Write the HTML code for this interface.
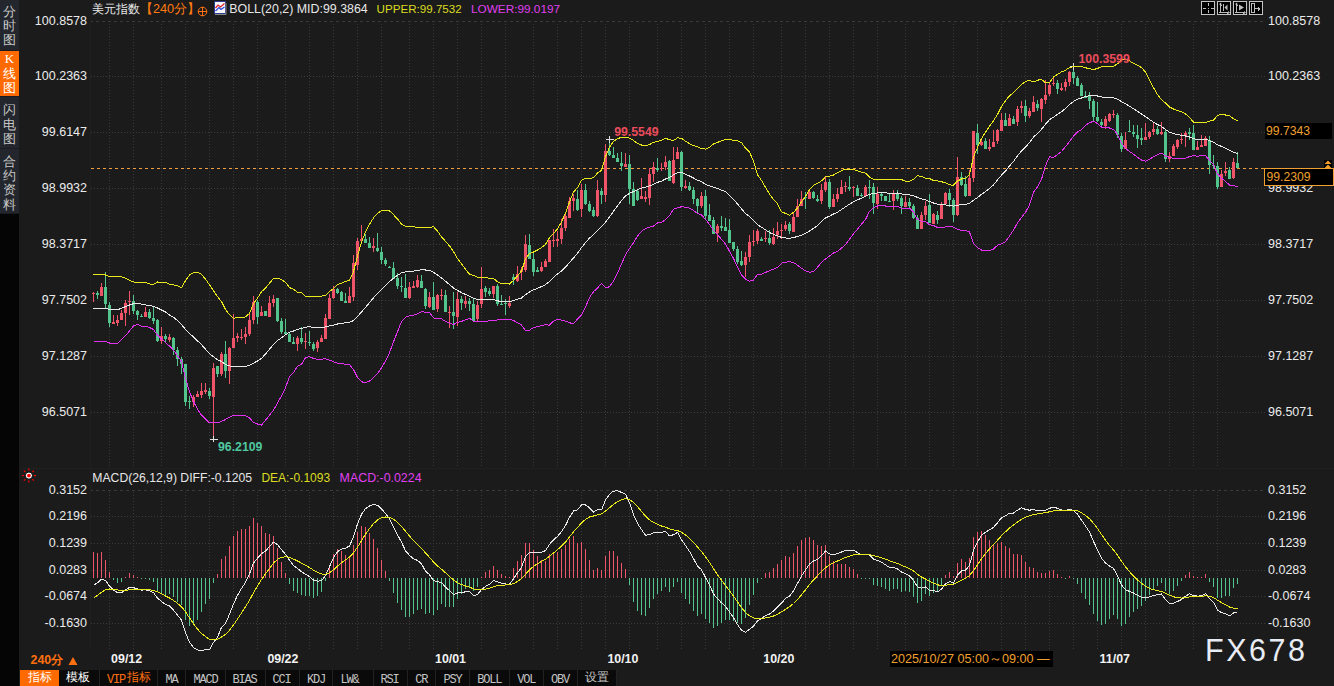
<!DOCTYPE html>
<html><head><meta charset="utf-8"><style>
*{margin:0;padding:0;box-sizing:border-box}
html,body{width:1334px;height:686px;overflow:hidden;background:#1b1b1b;font-family:"Liberation Sans",sans-serif}
.t{position:absolute;white-space:nowrap;line-height:14px}
.ax{position:absolute;font-size:12.5px;line-height:14px;color:#ebebeb;white-space:nowrap}
.ax.l{right:1247px;text-align:right}
.ax.r{left:1268px}
#side{position:absolute;left:0;top:0;width:19px;height:686px;background:#050505}
.tab{position:absolute;left:0;width:19px;background:#23262c;color:#c8c8c8;font-size:13px;line-height:14.3px;text-align:center;border-bottom:1px solid #1a1c20}
.tab.on{background:#ff6a00;color:#fff}
#tb{position:absolute;left:20px;top:670px;height:16px;display:flex}
#tb div{height:16px;line-height:16px;font-size:12px;text-align:center;background:#0a0a0a;color:#b4b4b4;border-right:1px solid #2c2c2c;font-family:"Liberation Mono",monospace;letter-spacing:-1px}
</style></head><body>
<svg width="1334" height="686" style="position:absolute;left:0;top:0"><line x1="109.5" y1="24" x2="109.5" y2="466" stroke="#3a3a3a" stroke-dasharray="1 2"/><line x1="133.5" y1="24" x2="133.5" y2="466" stroke="#3a3a3a" stroke-dasharray="1 2"/><line x1="161.5" y1="24" x2="161.5" y2="466" stroke="#3a3a3a" stroke-dasharray="1 2"/><line x1="185.5" y1="24" x2="185.5" y2="466" stroke="#3a3a3a" stroke-dasharray="1 2"/><line x1="209.5" y1="24" x2="209.5" y2="466" stroke="#3a3a3a" stroke-dasharray="1 2"/><line x1="233.5" y1="24" x2="233.5" y2="466" stroke="#3a3a3a" stroke-dasharray="1 2"/><line x1="257.5" y1="24" x2="257.5" y2="466" stroke="#3a3a3a" stroke-dasharray="1 2"/><line x1="285.5" y1="24" x2="285.5" y2="466" stroke="#3a3a3a" stroke-dasharray="1 2"/><line x1="309.5" y1="24" x2="309.5" y2="466" stroke="#3a3a3a" stroke-dasharray="1 2"/><line x1="333.5" y1="24" x2="333.5" y2="466" stroke="#3a3a3a" stroke-dasharray="1 2"/><line x1="357.5" y1="24" x2="357.5" y2="466" stroke="#3a3a3a" stroke-dasharray="1 2"/><line x1="381.5" y1="24" x2="381.5" y2="466" stroke="#3a3a3a" stroke-dasharray="1 2"/><line x1="409.5" y1="24" x2="409.5" y2="466" stroke="#3a3a3a" stroke-dasharray="1 2"/><line x1="433.5" y1="24" x2="433.5" y2="466" stroke="#3a3a3a" stroke-dasharray="1 2"/><line x1="457.5" y1="24" x2="457.5" y2="466" stroke="#3a3a3a" stroke-dasharray="1 2"/><line x1="481.5" y1="24" x2="481.5" y2="466" stroke="#3a3a3a" stroke-dasharray="1 2"/><line x1="505.5" y1="24" x2="505.5" y2="466" stroke="#3a3a3a" stroke-dasharray="1 2"/><line x1="533.5" y1="24" x2="533.5" y2="466" stroke="#3a3a3a" stroke-dasharray="1 2"/><line x1="557.5" y1="24" x2="557.5" y2="466" stroke="#3a3a3a" stroke-dasharray="1 2"/><line x1="581.5" y1="24" x2="581.5" y2="466" stroke="#3a3a3a" stroke-dasharray="1 2"/><line x1="605.5" y1="24" x2="605.5" y2="466" stroke="#3a3a3a" stroke-dasharray="1 2"/><line x1="629.5" y1="24" x2="629.5" y2="466" stroke="#3a3a3a" stroke-dasharray="1 2"/><line x1="657.5" y1="24" x2="657.5" y2="466" stroke="#3a3a3a" stroke-dasharray="1 2"/><line x1="681.5" y1="24" x2="681.5" y2="466" stroke="#3a3a3a" stroke-dasharray="1 2"/><line x1="705.5" y1="24" x2="705.5" y2="466" stroke="#3a3a3a" stroke-dasharray="1 2"/><line x1="729.5" y1="24" x2="729.5" y2="466" stroke="#3a3a3a" stroke-dasharray="1 2"/><line x1="753.5" y1="24" x2="753.5" y2="466" stroke="#3a3a3a" stroke-dasharray="1 2"/><line x1="781.5" y1="24" x2="781.5" y2="466" stroke="#3a3a3a" stroke-dasharray="1 2"/><line x1="805.5" y1="24" x2="805.5" y2="466" stroke="#3a3a3a" stroke-dasharray="1 2"/><line x1="829.5" y1="24" x2="829.5" y2="466" stroke="#3a3a3a" stroke-dasharray="1 2"/><line x1="853.5" y1="24" x2="853.5" y2="466" stroke="#3a3a3a" stroke-dasharray="1 2"/><line x1="877.5" y1="24" x2="877.5" y2="466" stroke="#3a3a3a" stroke-dasharray="1 2"/><line x1="905.5" y1="24" x2="905.5" y2="466" stroke="#3a3a3a" stroke-dasharray="1 2"/><line x1="929.5" y1="24" x2="929.5" y2="466" stroke="#3a3a3a" stroke-dasharray="1 2"/><line x1="953.5" y1="24" x2="953.5" y2="466" stroke="#3a3a3a" stroke-dasharray="1 2"/><line x1="977.5" y1="24" x2="977.5" y2="466" stroke="#3a3a3a" stroke-dasharray="1 2"/><line x1="1001.5" y1="24" x2="1001.5" y2="466" stroke="#3a3a3a" stroke-dasharray="1 2"/><line x1="1025.5" y1="24" x2="1025.5" y2="466" stroke="#3a3a3a" stroke-dasharray="1 2"/><line x1="1049.5" y1="24" x2="1049.5" y2="466" stroke="#3a3a3a" stroke-dasharray="1 2"/><line x1="1073.5" y1="24" x2="1073.5" y2="466" stroke="#3a3a3a" stroke-dasharray="1 2"/><line x1="1097.5" y1="24" x2="1097.5" y2="466" stroke="#3a3a3a" stroke-dasharray="1 2"/><line x1="1121.5" y1="24" x2="1121.5" y2="466" stroke="#3a3a3a" stroke-dasharray="1 2"/><line x1="1145.5" y1="24" x2="1145.5" y2="466" stroke="#3a3a3a" stroke-dasharray="1 2"/><line x1="1169.5" y1="24" x2="1169.5" y2="466" stroke="#3a3a3a" stroke-dasharray="1 2"/><line x1="1193.5" y1="24" x2="1193.5" y2="466" stroke="#3a3a3a" stroke-dasharray="1 2"/><line x1="1217.5" y1="24" x2="1217.5" y2="466" stroke="#3a3a3a" stroke-dasharray="1 2"/><line x1="90" y1="21.5" x2="1265" y2="21.5" stroke="#3a3a3a" stroke-dasharray="3 3"/><line x1="91" y1="76.5" x2="1265" y2="76.5" stroke="#3a3a3a" stroke-dasharray="1 2"/><line x1="91" y1="132.5" x2="1265" y2="132.5" stroke="#3a3a3a" stroke-dasharray="1 2"/><line x1="91" y1="188.5" x2="1265" y2="188.5" stroke="#3a3a3a" stroke-dasharray="1 2"/><line x1="91" y1="244.5" x2="1265" y2="244.5" stroke="#3a3a3a" stroke-dasharray="1 2"/><line x1="91" y1="300.5" x2="1265" y2="300.5" stroke="#3a3a3a" stroke-dasharray="1 2"/><line x1="91" y1="356.5" x2="1265" y2="356.5" stroke="#3a3a3a" stroke-dasharray="1 2"/><line x1="91" y1="412.5" x2="1265" y2="412.5" stroke="#3a3a3a" stroke-dasharray="1 2"/><line x1="109.5" y1="492" x2="109.5" y2="650" stroke="#3a3a3a" stroke-dasharray="1 2"/><line x1="133.5" y1="492" x2="133.5" y2="650" stroke="#3a3a3a" stroke-dasharray="1 2"/><line x1="161.5" y1="492" x2="161.5" y2="650" stroke="#3a3a3a" stroke-dasharray="1 2"/><line x1="185.5" y1="492" x2="185.5" y2="650" stroke="#3a3a3a" stroke-dasharray="1 2"/><line x1="209.5" y1="492" x2="209.5" y2="650" stroke="#3a3a3a" stroke-dasharray="1 2"/><line x1="233.5" y1="492" x2="233.5" y2="650" stroke="#3a3a3a" stroke-dasharray="1 2"/><line x1="257.5" y1="492" x2="257.5" y2="650" stroke="#3a3a3a" stroke-dasharray="1 2"/><line x1="285.5" y1="492" x2="285.5" y2="650" stroke="#3a3a3a" stroke-dasharray="1 2"/><line x1="309.5" y1="492" x2="309.5" y2="650" stroke="#3a3a3a" stroke-dasharray="1 2"/><line x1="333.5" y1="492" x2="333.5" y2="650" stroke="#3a3a3a" stroke-dasharray="1 2"/><line x1="357.5" y1="492" x2="357.5" y2="650" stroke="#3a3a3a" stroke-dasharray="1 2"/><line x1="381.5" y1="492" x2="381.5" y2="650" stroke="#3a3a3a" stroke-dasharray="1 2"/><line x1="409.5" y1="492" x2="409.5" y2="650" stroke="#3a3a3a" stroke-dasharray="1 2"/><line x1="433.5" y1="492" x2="433.5" y2="650" stroke="#3a3a3a" stroke-dasharray="1 2"/><line x1="457.5" y1="492" x2="457.5" y2="650" stroke="#3a3a3a" stroke-dasharray="1 2"/><line x1="481.5" y1="492" x2="481.5" y2="650" stroke="#3a3a3a" stroke-dasharray="1 2"/><line x1="505.5" y1="492" x2="505.5" y2="650" stroke="#3a3a3a" stroke-dasharray="1 2"/><line x1="533.5" y1="492" x2="533.5" y2="650" stroke="#3a3a3a" stroke-dasharray="1 2"/><line x1="557.5" y1="492" x2="557.5" y2="650" stroke="#3a3a3a" stroke-dasharray="1 2"/><line x1="581.5" y1="492" x2="581.5" y2="650" stroke="#3a3a3a" stroke-dasharray="1 2"/><line x1="605.5" y1="492" x2="605.5" y2="650" stroke="#3a3a3a" stroke-dasharray="1 2"/><line x1="629.5" y1="492" x2="629.5" y2="650" stroke="#3a3a3a" stroke-dasharray="1 2"/><line x1="657.5" y1="492" x2="657.5" y2="650" stroke="#3a3a3a" stroke-dasharray="1 2"/><line x1="681.5" y1="492" x2="681.5" y2="650" stroke="#3a3a3a" stroke-dasharray="1 2"/><line x1="705.5" y1="492" x2="705.5" y2="650" stroke="#3a3a3a" stroke-dasharray="1 2"/><line x1="729.5" y1="492" x2="729.5" y2="650" stroke="#3a3a3a" stroke-dasharray="1 2"/><line x1="753.5" y1="492" x2="753.5" y2="650" stroke="#3a3a3a" stroke-dasharray="1 2"/><line x1="781.5" y1="492" x2="781.5" y2="650" stroke="#3a3a3a" stroke-dasharray="1 2"/><line x1="805.5" y1="492" x2="805.5" y2="650" stroke="#3a3a3a" stroke-dasharray="1 2"/><line x1="829.5" y1="492" x2="829.5" y2="650" stroke="#3a3a3a" stroke-dasharray="1 2"/><line x1="853.5" y1="492" x2="853.5" y2="650" stroke="#3a3a3a" stroke-dasharray="1 2"/><line x1="877.5" y1="492" x2="877.5" y2="650" stroke="#3a3a3a" stroke-dasharray="1 2"/><line x1="905.5" y1="492" x2="905.5" y2="650" stroke="#3a3a3a" stroke-dasharray="1 2"/><line x1="929.5" y1="492" x2="929.5" y2="650" stroke="#3a3a3a" stroke-dasharray="1 2"/><line x1="953.5" y1="492" x2="953.5" y2="650" stroke="#3a3a3a" stroke-dasharray="1 2"/><line x1="977.5" y1="492" x2="977.5" y2="650" stroke="#3a3a3a" stroke-dasharray="1 2"/><line x1="1001.5" y1="492" x2="1001.5" y2="650" stroke="#3a3a3a" stroke-dasharray="1 2"/><line x1="1025.5" y1="492" x2="1025.5" y2="650" stroke="#3a3a3a" stroke-dasharray="1 2"/><line x1="1049.5" y1="492" x2="1049.5" y2="650" stroke="#3a3a3a" stroke-dasharray="1 2"/><line x1="1073.5" y1="492" x2="1073.5" y2="650" stroke="#3a3a3a" stroke-dasharray="1 2"/><line x1="1097.5" y1="492" x2="1097.5" y2="650" stroke="#3a3a3a" stroke-dasharray="1 2"/><line x1="1121.5" y1="492" x2="1121.5" y2="650" stroke="#3a3a3a" stroke-dasharray="1 2"/><line x1="1145.5" y1="492" x2="1145.5" y2="650" stroke="#3a3a3a" stroke-dasharray="1 2"/><line x1="1169.5" y1="492" x2="1169.5" y2="650" stroke="#3a3a3a" stroke-dasharray="1 2"/><line x1="1193.5" y1="492" x2="1193.5" y2="650" stroke="#3a3a3a" stroke-dasharray="1 2"/><line x1="1217.5" y1="492" x2="1217.5" y2="650" stroke="#3a3a3a" stroke-dasharray="1 2"/><line x1="90" y1="490.5" x2="1265" y2="490.5" stroke="#3a3a3a" stroke-dasharray="3 3"/><line x1="91" y1="516.5" x2="1265" y2="516.5" stroke="#3a3a3a" stroke-dasharray="1 2"/><line x1="91" y1="543.5" x2="1265" y2="543.5" stroke="#3a3a3a" stroke-dasharray="1 2"/><line x1="91" y1="570.5" x2="1265" y2="570.5" stroke="#3a3a3a" stroke-dasharray="1 2"/><line x1="91" y1="596.5" x2="1265" y2="596.5" stroke="#3a3a3a" stroke-dasharray="1 2"/><line x1="91" y1="623.5" x2="1265" y2="623.5" stroke="#3a3a3a" stroke-dasharray="1 2"/><line x1="90.5" y1="20" x2="90.5" y2="650" stroke="#1f1f1f"/><line x1="20" y1="468.5" x2="1334" y2="468.5" stroke="#202020"/><line x1="91" y1="168.5" x2="1264" y2="168.5" stroke="#f0a040" stroke-dasharray="3 3"/><g shape-rendering="crispEdges"><rect x="93" y="292" width="1" height="10" fill="#f05468"/><rect x="92" y="293" width="3" height="1" fill="#f05468"/><rect x="97" y="291" width="1" height="8" fill="#52c48c"/><rect x="96" y="293" width="3" height="2" fill="#52c48c"/><rect x="101" y="283" width="1" height="13" fill="#f05468"/><rect x="100" y="287" width="3" height="9" fill="#f05468"/><rect x="105" y="272" width="1" height="36" fill="#52c48c"/><rect x="104" y="287" width="3" height="17" fill="#52c48c"/><rect x="109" y="302" width="1" height="25" fill="#52c48c"/><rect x="108" y="305" width="3" height="18" fill="#52c48c"/><rect x="113" y="315" width="1" height="9" fill="#f05468"/><rect x="112" y="322" width="3" height="2" fill="#f05468"/><rect x="117" y="315" width="1" height="11" fill="#f05468"/><rect x="116" y="320" width="3" height="3" fill="#f05468"/><rect x="121" y="310" width="1" height="10" fill="#f05468"/><rect x="120" y="313" width="3" height="7" fill="#f05468"/><rect x="125" y="300" width="1" height="26" fill="#f05468"/><rect x="124" y="303" width="3" height="10" fill="#f05468"/><rect x="129" y="291" width="1" height="24" fill="#f05468"/><rect x="128" y="301" width="3" height="1" fill="#f05468"/><rect x="133" y="295" width="1" height="19" fill="#52c48c"/><rect x="132" y="301" width="3" height="10" fill="#52c48c"/><rect x="137" y="310" width="1" height="10" fill="#52c48c"/><rect x="136" y="311" width="3" height="4" fill="#52c48c"/><rect x="141" y="314" width="1" height="3" fill="#52c48c"/><rect x="140" y="316" width="3" height="1" fill="#52c48c"/><rect x="145" y="307" width="1" height="10" fill="#f05468"/><rect x="144" y="312" width="3" height="5" fill="#f05468"/><rect x="149" y="309" width="1" height="10" fill="#52c48c"/><rect x="148" y="312" width="3" height="6" fill="#52c48c"/><rect x="153" y="306" width="1" height="18" fill="#52c48c"/><rect x="152" y="318" width="3" height="3" fill="#52c48c"/><rect x="157" y="319" width="1" height="23" fill="#52c48c"/><rect x="156" y="320" width="3" height="21" fill="#52c48c"/><rect x="161" y="327" width="1" height="17" fill="#f05468"/><rect x="160" y="336" width="3" height="5" fill="#f05468"/><rect x="165" y="334" width="1" height="9" fill="#52c48c"/><rect x="164" y="336" width="3" height="3" fill="#52c48c"/><rect x="169" y="334" width="1" height="8" fill="#f05468"/><rect x="168" y="337" width="3" height="3" fill="#f05468"/><rect x="173" y="337" width="1" height="18" fill="#52c48c"/><rect x="172" y="338" width="3" height="12" fill="#52c48c"/><rect x="177" y="347" width="1" height="19" fill="#52c48c"/><rect x="176" y="350" width="3" height="9" fill="#52c48c"/><rect x="181" y="357" width="1" height="17" fill="#52c48c"/><rect x="180" y="359" width="3" height="5" fill="#52c48c"/><rect x="185" y="364" width="1" height="42" fill="#52c48c"/><rect x="184" y="364" width="3" height="38" fill="#52c48c"/><rect x="189" y="396" width="1" height="13" fill="#52c48c"/><rect x="188" y="401" width="3" height="1" fill="#52c48c"/><rect x="193" y="395" width="1" height="12" fill="#f05468"/><rect x="192" y="397" width="3" height="5" fill="#f05468"/><rect x="197" y="391" width="1" height="6" fill="#f05468"/><rect x="196" y="394" width="3" height="3" fill="#f05468"/><rect x="201" y="383" width="1" height="15" fill="#f05468"/><rect x="200" y="391" width="3" height="4" fill="#f05468"/><rect x="205" y="383" width="1" height="11" fill="#f05468"/><rect x="204" y="390" width="3" height="2" fill="#f05468"/><rect x="209" y="388" width="1" height="11" fill="#52c48c"/><rect x="208" y="391" width="3" height="5" fill="#52c48c"/><rect x="213" y="363" width="1" height="75" fill="#f05468"/><rect x="212" y="368" width="3" height="29" fill="#f05468"/><rect x="217" y="366" width="1" height="11" fill="#52c48c"/><rect x="216" y="366" width="3" height="8" fill="#52c48c"/><rect x="221" y="352" width="1" height="24" fill="#f05468"/><rect x="220" y="354" width="3" height="20" fill="#f05468"/><rect x="225" y="341" width="1" height="37" fill="#52c48c"/><rect x="224" y="354" width="3" height="17" fill="#52c48c"/><rect x="229" y="347" width="1" height="37" fill="#f05468"/><rect x="228" y="348" width="3" height="23" fill="#f05468"/><rect x="233" y="314" width="1" height="34" fill="#f05468"/><rect x="232" y="338" width="3" height="10" fill="#f05468"/><rect x="237" y="333" width="1" height="9" fill="#f05468"/><rect x="236" y="336" width="3" height="2" fill="#f05468"/><rect x="241" y="329" width="1" height="11" fill="#f05468"/><rect x="240" y="337" width="3" height="1" fill="#f05468"/><rect x="245" y="327" width="1" height="17" fill="#f05468"/><rect x="244" y="334" width="3" height="3" fill="#f05468"/><rect x="249" y="314" width="1" height="22" fill="#f05468"/><rect x="248" y="320" width="3" height="14" fill="#f05468"/><rect x="253" y="296" width="1" height="28" fill="#f05468"/><rect x="252" y="302" width="3" height="18" fill="#f05468"/><rect x="257" y="300" width="1" height="24" fill="#52c48c"/><rect x="256" y="302" width="3" height="15" fill="#52c48c"/><rect x="261" y="306" width="1" height="10" fill="#f05468"/><rect x="260" y="312" width="3" height="4" fill="#f05468"/><rect x="265" y="311" width="1" height="5" fill="#52c48c"/><rect x="264" y="311" width="3" height="5" fill="#52c48c"/><rect x="269" y="296" width="1" height="21" fill="#f05468"/><rect x="268" y="303" width="3" height="14" fill="#f05468"/><rect x="273" y="295" width="1" height="12" fill="#f05468"/><rect x="272" y="299" width="3" height="4" fill="#f05468"/><rect x="277" y="298" width="1" height="24" fill="#52c48c"/><rect x="276" y="298" width="3" height="23" fill="#52c48c"/><rect x="281" y="318" width="1" height="16" fill="#52c48c"/><rect x="280" y="321" width="3" height="11" fill="#52c48c"/><rect x="285" y="319" width="1" height="16" fill="#52c48c"/><rect x="284" y="332" width="3" height="2" fill="#52c48c"/><rect x="289" y="333" width="1" height="9" fill="#52c48c"/><rect x="288" y="334" width="3" height="8" fill="#52c48c"/><rect x="293" y="337" width="1" height="7" fill="#52c48c"/><rect x="292" y="342" width="3" height="2" fill="#52c48c"/><rect x="297" y="336" width="1" height="15" fill="#f05468"/><rect x="296" y="338" width="3" height="6" fill="#f05468"/><rect x="301" y="327" width="1" height="17" fill="#52c48c"/><rect x="300" y="338" width="3" height="4" fill="#52c48c"/><rect x="305" y="333" width="1" height="16" fill="#f05468"/><rect x="304" y="341" width="3" height="1" fill="#f05468"/><rect x="309" y="331" width="1" height="15" fill="#52c48c"/><rect x="308" y="342" width="3" height="1" fill="#52c48c"/><rect x="313" y="342" width="1" height="9" fill="#52c48c"/><rect x="312" y="344" width="3" height="5" fill="#52c48c"/><rect x="317" y="340" width="1" height="12" fill="#f05468"/><rect x="316" y="342" width="3" height="6" fill="#f05468"/><rect x="321" y="335" width="1" height="7" fill="#f05468"/><rect x="320" y="338" width="3" height="4" fill="#f05468"/><rect x="325" y="314" width="1" height="25" fill="#f05468"/><rect x="324" y="318" width="3" height="21" fill="#f05468"/><rect x="329" y="294" width="1" height="25" fill="#f05468"/><rect x="328" y="298" width="3" height="21" fill="#f05468"/><rect x="333" y="286" width="1" height="13" fill="#f05468"/><rect x="332" y="289" width="3" height="9" fill="#f05468"/><rect x="337" y="288" width="1" height="6" fill="#52c48c"/><rect x="336" y="289" width="3" height="4" fill="#52c48c"/><rect x="341" y="291" width="1" height="10" fill="#52c48c"/><rect x="340" y="292" width="3" height="9" fill="#52c48c"/><rect x="345" y="293" width="1" height="10" fill="#52c48c"/><rect x="344" y="301" width="3" height="2" fill="#52c48c"/><rect x="349" y="287" width="1" height="16" fill="#f05468"/><rect x="348" y="296" width="3" height="7" fill="#f05468"/><rect x="353" y="255" width="1" height="46" fill="#f05468"/><rect x="352" y="263" width="3" height="34" fill="#f05468"/><rect x="357" y="238" width="1" height="32" fill="#f05468"/><rect x="356" y="241" width="3" height="24" fill="#f05468"/><rect x="361" y="225" width="1" height="16" fill="#f05468"/><rect x="360" y="239" width="3" height="2" fill="#f05468"/><rect x="365" y="234" width="1" height="9" fill="#52c48c"/><rect x="364" y="239" width="3" height="4" fill="#52c48c"/><rect x="369" y="237" width="1" height="11" fill="#52c48c"/><rect x="368" y="243" width="3" height="5" fill="#52c48c"/><rect x="373" y="238" width="1" height="14" fill="#f05468"/><rect x="372" y="246" width="3" height="2" fill="#f05468"/><rect x="377" y="233" width="1" height="19" fill="#52c48c"/><rect x="376" y="248" width="3" height="3" fill="#52c48c"/><rect x="381" y="247" width="1" height="17" fill="#52c48c"/><rect x="380" y="252" width="3" height="8" fill="#52c48c"/><rect x="385" y="258" width="1" height="8" fill="#52c48c"/><rect x="384" y="260" width="3" height="4" fill="#52c48c"/><rect x="389" y="266" width="1" height="2" fill="#52c48c"/><rect x="388" y="267" width="3" height="1" fill="#52c48c"/><rect x="393" y="262" width="1" height="17" fill="#52c48c"/><rect x="392" y="268" width="3" height="11" fill="#52c48c"/><rect x="397" y="273" width="1" height="16" fill="#52c48c"/><rect x="396" y="278" width="3" height="8" fill="#52c48c"/><rect x="401" y="277" width="1" height="15" fill="#52c48c"/><rect x="400" y="286" width="3" height="1" fill="#52c48c"/><rect x="405" y="274" width="1" height="24" fill="#52c48c"/><rect x="404" y="288" width="3" height="10" fill="#52c48c"/><rect x="409" y="282" width="1" height="17" fill="#f05468"/><rect x="408" y="287" width="3" height="11" fill="#f05468"/><rect x="413" y="281" width="1" height="7" fill="#f05468"/><rect x="412" y="286" width="3" height="2" fill="#f05468"/><rect x="417" y="275" width="1" height="13" fill="#f05468"/><rect x="416" y="280" width="3" height="7" fill="#f05468"/><rect x="421" y="275" width="1" height="13" fill="#52c48c"/><rect x="420" y="281" width="3" height="7" fill="#52c48c"/><rect x="425" y="288" width="1" height="21" fill="#52c48c"/><rect x="424" y="289" width="3" height="17" fill="#52c48c"/><rect x="429" y="292" width="1" height="16" fill="#f05468"/><rect x="428" y="297" width="3" height="10" fill="#f05468"/><rect x="433" y="282" width="1" height="28" fill="#52c48c"/><rect x="432" y="297" width="3" height="13" fill="#52c48c"/><rect x="437" y="294" width="1" height="18" fill="#f05468"/><rect x="436" y="295" width="3" height="14" fill="#f05468"/><rect x="441" y="289" width="1" height="11" fill="#f05468"/><rect x="440" y="295" width="3" height="1" fill="#f05468"/><rect x="445" y="290" width="1" height="22" fill="#52c48c"/><rect x="444" y="295" width="3" height="17" fill="#52c48c"/><rect x="449" y="306" width="1" height="22" fill="#f05468"/><rect x="448" y="312" width="3" height="1" fill="#f05468"/><rect x="453" y="292" width="1" height="37" fill="#52c48c"/><rect x="452" y="312" width="3" height="4" fill="#52c48c"/><rect x="457" y="292" width="1" height="34" fill="#f05468"/><rect x="456" y="299" width="3" height="18" fill="#f05468"/><rect x="461" y="296" width="1" height="14" fill="#52c48c"/><rect x="460" y="299" width="3" height="4" fill="#52c48c"/><rect x="465" y="296" width="1" height="12" fill="#f05468"/><rect x="464" y="301" width="3" height="3" fill="#f05468"/><rect x="469" y="298" width="1" height="13" fill="#52c48c"/><rect x="468" y="301" width="3" height="3" fill="#52c48c"/><rect x="473" y="299" width="1" height="22" fill="#52c48c"/><rect x="472" y="304" width="3" height="17" fill="#52c48c"/><rect x="477" y="301" width="1" height="21" fill="#f05468"/><rect x="476" y="305" width="3" height="14" fill="#f05468"/><rect x="481" y="267" width="1" height="41" fill="#f05468"/><rect x="480" y="289" width="3" height="15" fill="#f05468"/><rect x="485" y="286" width="1" height="11" fill="#52c48c"/><rect x="484" y="288" width="3" height="4" fill="#52c48c"/><rect x="489" y="288" width="1" height="8" fill="#52c48c"/><rect x="488" y="291" width="3" height="3" fill="#52c48c"/><rect x="493" y="286" width="1" height="12" fill="#f05468"/><rect x="492" y="286" width="3" height="8" fill="#f05468"/><rect x="497" y="284" width="1" height="22" fill="#52c48c"/><rect x="496" y="286" width="3" height="18" fill="#52c48c"/><rect x="501" y="295" width="1" height="9" fill="#52c48c"/><rect x="500" y="304" width="3" height="1" fill="#52c48c"/><rect x="505" y="299" width="1" height="16" fill="#52c48c"/><rect x="504" y="303" width="3" height="1" fill="#52c48c"/><rect x="509" y="296" width="1" height="12" fill="#f05468"/><rect x="508" y="303" width="3" height="3" fill="#f05468"/><rect x="513" y="274" width="1" height="11" fill="#52c48c"/><rect x="512" y="277" width="3" height="3" fill="#52c48c"/><rect x="517" y="266" width="1" height="16" fill="#f05468"/><rect x="516" y="274" width="3" height="7" fill="#f05468"/><rect x="521" y="267" width="1" height="13" fill="#f05468"/><rect x="520" y="270" width="3" height="2" fill="#f05468"/><rect x="525" y="235" width="1" height="37" fill="#f05468"/><rect x="524" y="244" width="3" height="26" fill="#f05468"/><rect x="529" y="234" width="1" height="25" fill="#52c48c"/><rect x="528" y="245" width="3" height="14" fill="#52c48c"/><rect x="533" y="253" width="1" height="23" fill="#52c48c"/><rect x="532" y="259" width="3" height="13" fill="#52c48c"/><rect x="537" y="267" width="1" height="5" fill="#52c48c"/><rect x="536" y="270" width="3" height="2" fill="#52c48c"/><rect x="541" y="262" width="1" height="10" fill="#f05468"/><rect x="540" y="267" width="3" height="4" fill="#f05468"/><rect x="545" y="259" width="1" height="8" fill="#f05468"/><rect x="544" y="261" width="3" height="6" fill="#f05468"/><rect x="549" y="240" width="1" height="22" fill="#f05468"/><rect x="548" y="240" width="3" height="22" fill="#f05468"/><rect x="553" y="229" width="1" height="18" fill="#f05468"/><rect x="552" y="240" width="3" height="1" fill="#f05468"/><rect x="557" y="231" width="1" height="16" fill="#f05468"/><rect x="556" y="239" width="3" height="2" fill="#f05468"/><rect x="561" y="219" width="1" height="25" fill="#f05468"/><rect x="560" y="228" width="3" height="11" fill="#f05468"/><rect x="565" y="212" width="1" height="19" fill="#f05468"/><rect x="564" y="216" width="3" height="12" fill="#f05468"/><rect x="569" y="197" width="1" height="21" fill="#f05468"/><rect x="568" y="201" width="3" height="17" fill="#f05468"/><rect x="573" y="194" width="1" height="17" fill="#f05468"/><rect x="572" y="198" width="3" height="3" fill="#f05468"/><rect x="577" y="190" width="1" height="21" fill="#52c48c"/><rect x="576" y="199" width="3" height="11" fill="#52c48c"/><rect x="581" y="184" width="1" height="33" fill="#f05468"/><rect x="580" y="190" width="3" height="19" fill="#f05468"/><rect x="585" y="184" width="1" height="21" fill="#52c48c"/><rect x="584" y="190" width="3" height="14" fill="#52c48c"/><rect x="589" y="201" width="1" height="11" fill="#52c48c"/><rect x="588" y="204" width="3" height="7" fill="#52c48c"/><rect x="593" y="207" width="1" height="10" fill="#52c48c"/><rect x="592" y="210" width="3" height="6" fill="#52c48c"/><rect x="597" y="180" width="1" height="37" fill="#f05468"/><rect x="596" y="190" width="3" height="26" fill="#f05468"/><rect x="601" y="188" width="1" height="16" fill="#52c48c"/><rect x="600" y="191" width="3" height="4" fill="#52c48c"/><rect x="605" y="144" width="1" height="58" fill="#f05468"/><rect x="604" y="151" width="3" height="44" fill="#f05468"/><rect x="609" y="139" width="1" height="17" fill="#52c48c"/><rect x="608" y="151" width="3" height="4" fill="#52c48c"/><rect x="613" y="147" width="1" height="11" fill="#52c48c"/><rect x="612" y="155" width="3" height="3" fill="#52c48c"/><rect x="617" y="153" width="1" height="9" fill="#52c48c"/><rect x="616" y="158" width="3" height="4" fill="#52c48c"/><rect x="621" y="152" width="1" height="19" fill="#52c48c"/><rect x="620" y="163" width="3" height="3" fill="#52c48c"/><rect x="625" y="153" width="1" height="14" fill="#f05468"/><rect x="624" y="164" width="3" height="3" fill="#f05468"/><rect x="629" y="155" width="1" height="49" fill="#52c48c"/><rect x="628" y="164" width="3" height="25" fill="#52c48c"/><rect x="633" y="182" width="1" height="24" fill="#52c48c"/><rect x="632" y="189" width="3" height="17" fill="#52c48c"/><rect x="637" y="189" width="1" height="12" fill="#52c48c"/><rect x="636" y="191" width="3" height="9" fill="#52c48c"/><rect x="641" y="178" width="1" height="21" fill="#f05468"/><rect x="640" y="196" width="3" height="3" fill="#f05468"/><rect x="645" y="191" width="1" height="11" fill="#f05468"/><rect x="644" y="197" width="3" height="2" fill="#f05468"/><rect x="649" y="168" width="1" height="37" fill="#f05468"/><rect x="648" y="174" width="3" height="24" fill="#f05468"/><rect x="653" y="162" width="1" height="20" fill="#f05468"/><rect x="652" y="167" width="3" height="7" fill="#f05468"/><rect x="657" y="158" width="1" height="14" fill="#52c48c"/><rect x="656" y="168" width="3" height="2" fill="#52c48c"/><rect x="661" y="163" width="1" height="8" fill="#f05468"/><rect x="660" y="168" width="3" height="1" fill="#f05468"/><rect x="665" y="156" width="1" height="14" fill="#f05468"/><rect x="664" y="162" width="3" height="5" fill="#f05468"/><rect x="669" y="160" width="1" height="21" fill="#52c48c"/><rect x="668" y="161" width="3" height="20" fill="#52c48c"/><rect x="673" y="147" width="1" height="37" fill="#f05468"/><rect x="672" y="160" width="3" height="23" fill="#f05468"/><rect x="677" y="147" width="1" height="12" fill="#f05468"/><rect x="676" y="152" width="3" height="7" fill="#f05468"/><rect x="681" y="151" width="1" height="40" fill="#52c48c"/><rect x="680" y="152" width="3" height="35" fill="#52c48c"/><rect x="685" y="180" width="1" height="9" fill="#f05468"/><rect x="684" y="186" width="3" height="2" fill="#f05468"/><rect x="689" y="182" width="1" height="9" fill="#52c48c"/><rect x="688" y="186" width="3" height="4" fill="#52c48c"/><rect x="693" y="187" width="1" height="17" fill="#52c48c"/><rect x="692" y="190" width="3" height="9" fill="#52c48c"/><rect x="697" y="198" width="1" height="16" fill="#52c48c"/><rect x="696" y="199" width="3" height="7" fill="#52c48c"/><rect x="701" y="192" width="1" height="16" fill="#f05468"/><rect x="700" y="196" width="3" height="10" fill="#f05468"/><rect x="705" y="190" width="1" height="29" fill="#52c48c"/><rect x="704" y="196" width="3" height="20" fill="#52c48c"/><rect x="709" y="204" width="1" height="17" fill="#52c48c"/><rect x="708" y="215" width="3" height="6" fill="#52c48c"/><rect x="713" y="217" width="1" height="17" fill="#52c48c"/><rect x="712" y="220" width="3" height="14" fill="#52c48c"/><rect x="717" y="224" width="1" height="18" fill="#f05468"/><rect x="716" y="226" width="3" height="7" fill="#f05468"/><rect x="721" y="216" width="1" height="15" fill="#52c48c"/><rect x="720" y="226" width="3" height="2" fill="#52c48c"/><rect x="725" y="218" width="1" height="13" fill="#52c48c"/><rect x="724" y="227" width="3" height="4" fill="#52c48c"/><rect x="729" y="219" width="1" height="24" fill="#52c48c"/><rect x="728" y="230" width="3" height="13" fill="#52c48c"/><rect x="733" y="242" width="1" height="9" fill="#52c48c"/><rect x="732" y="242" width="3" height="7" fill="#52c48c"/><rect x="737" y="246" width="1" height="18" fill="#52c48c"/><rect x="736" y="249" width="3" height="13" fill="#52c48c"/><rect x="741" y="251" width="1" height="15" fill="#52c48c"/><rect x="740" y="261" width="3" height="4" fill="#52c48c"/><rect x="745" y="252" width="1" height="25" fill="#f05468"/><rect x="744" y="257" width="3" height="8" fill="#f05468"/><rect x="749" y="235" width="1" height="27" fill="#f05468"/><rect x="748" y="242" width="3" height="15" fill="#f05468"/><rect x="753" y="230" width="1" height="16" fill="#f05468"/><rect x="752" y="241" width="3" height="1" fill="#f05468"/><rect x="757" y="229" width="1" height="15" fill="#f05468"/><rect x="756" y="231" width="3" height="10" fill="#f05468"/><rect x="761" y="237" width="1" height="4" fill="#52c48c"/><rect x="760" y="239" width="3" height="2" fill="#52c48c"/><rect x="765" y="231" width="1" height="11" fill="#f05468"/><rect x="764" y="238" width="3" height="1" fill="#f05468"/><rect x="769" y="230" width="1" height="15" fill="#52c48c"/><rect x="768" y="238" width="3" height="5" fill="#52c48c"/><rect x="773" y="228" width="1" height="17" fill="#f05468"/><rect x="772" y="237" width="3" height="7" fill="#f05468"/><rect x="777" y="222" width="1" height="17" fill="#f05468"/><rect x="776" y="231" width="3" height="4" fill="#f05468"/><rect x="781" y="224" width="1" height="15" fill="#f05468"/><rect x="780" y="230" width="3" height="1" fill="#f05468"/><rect x="785" y="221" width="1" height="10" fill="#f05468"/><rect x="784" y="225" width="3" height="4" fill="#f05468"/><rect x="789" y="222" width="1" height="12" fill="#52c48c"/><rect x="788" y="224" width="3" height="7" fill="#52c48c"/><rect x="793" y="213" width="1" height="19" fill="#f05468"/><rect x="792" y="217" width="3" height="15" fill="#f05468"/><rect x="797" y="199" width="1" height="18" fill="#f05468"/><rect x="796" y="206" width="3" height="11" fill="#f05468"/><rect x="801" y="191" width="1" height="15" fill="#f05468"/><rect x="800" y="199" width="3" height="7" fill="#f05468"/><rect x="805" y="192" width="1" height="17" fill="#52c48c"/><rect x="804" y="197" width="3" height="1" fill="#52c48c"/><rect x="809" y="191" width="1" height="8" fill="#f05468"/><rect x="808" y="192" width="3" height="7" fill="#f05468"/><rect x="813" y="191" width="1" height="8" fill="#52c48c"/><rect x="812" y="192" width="3" height="6" fill="#52c48c"/><rect x="817" y="195" width="1" height="7" fill="#52c48c"/><rect x="816" y="199" width="3" height="2" fill="#52c48c"/><rect x="821" y="184" width="1" height="20" fill="#f05468"/><rect x="820" y="190" width="3" height="11" fill="#f05468"/><rect x="825" y="176" width="1" height="16" fill="#f05468"/><rect x="824" y="182" width="3" height="8" fill="#f05468"/><rect x="829" y="179" width="1" height="30" fill="#52c48c"/><rect x="828" y="182" width="3" height="25" fill="#52c48c"/><rect x="833" y="194" width="1" height="13" fill="#f05468"/><rect x="832" y="199" width="3" height="8" fill="#f05468"/><rect x="837" y="188" width="1" height="14" fill="#f05468"/><rect x="836" y="194" width="3" height="5" fill="#f05468"/><rect x="841" y="180" width="1" height="14" fill="#f05468"/><rect x="840" y="187" width="3" height="7" fill="#f05468"/><rect x="845" y="182" width="1" height="10" fill="#f05468"/><rect x="844" y="186" width="3" height="1" fill="#f05468"/><rect x="849" y="176" width="1" height="15" fill="#52c48c"/><rect x="848" y="187" width="3" height="2" fill="#52c48c"/><rect x="853" y="186" width="1" height="11" fill="#f05468"/><rect x="852" y="187" width="3" height="1" fill="#f05468"/><rect x="857" y="185" width="1" height="11" fill="#52c48c"/><rect x="856" y="188" width="3" height="8" fill="#52c48c"/><rect x="861" y="193" width="1" height="4" fill="#52c48c"/><rect x="860" y="195" width="3" height="1" fill="#52c48c"/><rect x="865" y="185" width="1" height="11" fill="#f05468"/><rect x="864" y="187" width="3" height="9" fill="#f05468"/><rect x="869" y="180" width="1" height="19" fill="#52c48c"/><rect x="868" y="187" width="3" height="1" fill="#52c48c"/><rect x="873" y="183" width="1" height="31" fill="#52c48c"/><rect x="872" y="187" width="3" height="16" fill="#52c48c"/><rect x="877" y="187" width="1" height="22" fill="#f05468"/><rect x="876" y="194" width="3" height="10" fill="#f05468"/><rect x="881" y="192" width="1" height="9" fill="#52c48c"/><rect x="880" y="194" width="3" height="2" fill="#52c48c"/><rect x="885" y="196" width="1" height="5" fill="#52c48c"/><rect x="884" y="196" width="3" height="5" fill="#52c48c"/><rect x="889" y="194" width="1" height="8" fill="#52c48c"/><rect x="888" y="201" width="3" height="1" fill="#52c48c"/><rect x="893" y="190" width="1" height="20" fill="#f05468"/><rect x="892" y="194" width="3" height="7" fill="#f05468"/><rect x="897" y="190" width="1" height="11" fill="#52c48c"/><rect x="896" y="194" width="3" height="5" fill="#52c48c"/><rect x="901" y="196" width="1" height="18" fill="#52c48c"/><rect x="900" y="198" width="3" height="8" fill="#52c48c"/><rect x="905" y="196" width="1" height="11" fill="#f05468"/><rect x="904" y="202" width="3" height="5" fill="#f05468"/><rect x="909" y="198" width="1" height="11" fill="#52c48c"/><rect x="908" y="202" width="3" height="4" fill="#52c48c"/><rect x="913" y="204" width="1" height="15" fill="#52c48c"/><rect x="912" y="206" width="3" height="12" fill="#52c48c"/><rect x="917" y="215" width="1" height="14" fill="#52c48c"/><rect x="916" y="218" width="3" height="11" fill="#52c48c"/><rect x="921" y="212" width="1" height="17" fill="#f05468"/><rect x="920" y="215" width="3" height="14" fill="#f05468"/><rect x="925" y="201" width="1" height="19" fill="#f05468"/><rect x="924" y="206" width="3" height="9" fill="#f05468"/><rect x="929" y="194" width="1" height="29" fill="#52c48c"/><rect x="928" y="205" width="3" height="18" fill="#52c48c"/><rect x="933" y="213" width="1" height="11" fill="#f05468"/><rect x="932" y="214" width="3" height="10" fill="#f05468"/><rect x="937" y="211" width="1" height="13" fill="#52c48c"/><rect x="936" y="215" width="3" height="5" fill="#52c48c"/><rect x="941" y="202" width="1" height="17" fill="#f05468"/><rect x="940" y="205" width="3" height="14" fill="#f05468"/><rect x="945" y="192" width="1" height="13" fill="#f05468"/><rect x="944" y="193" width="3" height="11" fill="#f05468"/><rect x="949" y="189" width="1" height="18" fill="#52c48c"/><rect x="948" y="193" width="3" height="7" fill="#52c48c"/><rect x="953" y="198" width="1" height="24" fill="#52c48c"/><rect x="952" y="200" width="3" height="15" fill="#52c48c"/><rect x="957" y="157" width="1" height="59" fill="#f05468"/><rect x="956" y="177" width="3" height="38" fill="#f05468"/><rect x="961" y="172" width="1" height="14" fill="#52c48c"/><rect x="960" y="177" width="3" height="8" fill="#52c48c"/><rect x="965" y="176" width="1" height="21" fill="#52c48c"/><rect x="964" y="184" width="3" height="12" fill="#52c48c"/><rect x="969" y="170" width="1" height="26" fill="#f05468"/><rect x="968" y="178" width="3" height="18" fill="#f05468"/><rect x="973" y="131" width="1" height="51" fill="#f05468"/><rect x="972" y="131" width="3" height="47" fill="#f05468"/><rect x="977" y="124" width="1" height="30" fill="#52c48c"/><rect x="976" y="133" width="3" height="12" fill="#52c48c"/><rect x="981" y="140" width="1" height="6" fill="#f05468"/><rect x="980" y="142" width="3" height="3" fill="#f05468"/><rect x="985" y="138" width="1" height="11" fill="#52c48c"/><rect x="984" y="141" width="3" height="8" fill="#52c48c"/><rect x="989" y="139" width="1" height="12" fill="#f05468"/><rect x="988" y="147" width="3" height="2" fill="#f05468"/><rect x="993" y="130" width="1" height="17" fill="#f05468"/><rect x="992" y="142" width="3" height="5" fill="#f05468"/><rect x="997" y="129" width="1" height="15" fill="#f05468"/><rect x="996" y="130" width="3" height="11" fill="#f05468"/><rect x="1001" y="113" width="1" height="18" fill="#f05468"/><rect x="1000" y="120" width="3" height="11" fill="#f05468"/><rect x="1005" y="113" width="1" height="13" fill="#52c48c"/><rect x="1004" y="120" width="3" height="6" fill="#52c48c"/><rect x="1009" y="114" width="1" height="12" fill="#f05468"/><rect x="1008" y="118" width="3" height="8" fill="#f05468"/><rect x="1013" y="116" width="1" height="8" fill="#52c48c"/><rect x="1012" y="119" width="3" height="5" fill="#52c48c"/><rect x="1017" y="106" width="1" height="20" fill="#f05468"/><rect x="1016" y="109" width="3" height="13" fill="#f05468"/><rect x="1021" y="101" width="1" height="12" fill="#f05468"/><rect x="1020" y="106" width="3" height="2" fill="#f05468"/><rect x="1025" y="100" width="1" height="22" fill="#52c48c"/><rect x="1024" y="106" width="3" height="10" fill="#52c48c"/><rect x="1029" y="108" width="1" height="10" fill="#f05468"/><rect x="1028" y="111" width="3" height="5" fill="#f05468"/><rect x="1033" y="96" width="1" height="16" fill="#f05468"/><rect x="1032" y="102" width="3" height="10" fill="#f05468"/><rect x="1037" y="100" width="1" height="11" fill="#52c48c"/><rect x="1036" y="104" width="3" height="4" fill="#52c48c"/><rect x="1041" y="98" width="1" height="24" fill="#f05468"/><rect x="1040" y="99" width="3" height="10" fill="#f05468"/><rect x="1045" y="80" width="1" height="24" fill="#f05468"/><rect x="1044" y="95" width="3" height="5" fill="#f05468"/><rect x="1049" y="82" width="1" height="14" fill="#f05468"/><rect x="1048" y="85" width="3" height="9" fill="#f05468"/><rect x="1053" y="78" width="1" height="8" fill="#f05468"/><rect x="1052" y="83" width="3" height="1" fill="#f05468"/><rect x="1057" y="80" width="1" height="14" fill="#52c48c"/><rect x="1056" y="83" width="3" height="6" fill="#52c48c"/><rect x="1061" y="83" width="1" height="8" fill="#f05468"/><rect x="1060" y="88" width="3" height="2" fill="#f05468"/><rect x="1065" y="79" width="1" height="12" fill="#f05468"/><rect x="1064" y="82" width="3" height="5" fill="#f05468"/><rect x="1069" y="71" width="1" height="15" fill="#f05468"/><rect x="1068" y="72" width="3" height="10" fill="#f05468"/><rect x="1073" y="65" width="1" height="19" fill="#52c48c"/><rect x="1072" y="72" width="3" height="6" fill="#52c48c"/><rect x="1077" y="76" width="1" height="10" fill="#52c48c"/><rect x="1076" y="78" width="3" height="8" fill="#52c48c"/><rect x="1081" y="83" width="1" height="13" fill="#52c48c"/><rect x="1080" y="85" width="3" height="11" fill="#52c48c"/><rect x="1085" y="91" width="1" height="7" fill="#52c48c"/><rect x="1084" y="96" width="3" height="2" fill="#52c48c"/><rect x="1089" y="92" width="1" height="17" fill="#52c48c"/><rect x="1088" y="96" width="3" height="5" fill="#52c48c"/><rect x="1093" y="99" width="1" height="22" fill="#52c48c"/><rect x="1092" y="101" width="3" height="16" fill="#52c48c"/><rect x="1097" y="102" width="1" height="20" fill="#52c48c"/><rect x="1096" y="117" width="3" height="4" fill="#52c48c"/><rect x="1101" y="119" width="1" height="7" fill="#52c48c"/><rect x="1100" y="122" width="3" height="3" fill="#52c48c"/><rect x="1105" y="116" width="1" height="13" fill="#f05468"/><rect x="1104" y="119" width="3" height="7" fill="#f05468"/><rect x="1109" y="113" width="1" height="9" fill="#f05468"/><rect x="1108" y="114" width="3" height="7" fill="#f05468"/><rect x="1113" y="110" width="1" height="8" fill="#f05468"/><rect x="1112" y="114" width="3" height="1" fill="#f05468"/><rect x="1117" y="113" width="1" height="25" fill="#52c48c"/><rect x="1116" y="115" width="3" height="20" fill="#52c48c"/><rect x="1121" y="133" width="1" height="19" fill="#52c48c"/><rect x="1120" y="136" width="3" height="13" fill="#52c48c"/><rect x="1125" y="132" width="1" height="17" fill="#f05468"/><rect x="1124" y="140" width="3" height="9" fill="#f05468"/><rect x="1129" y="120" width="1" height="12" fill="#52c48c"/><rect x="1128" y="131" width="3" height="1" fill="#52c48c"/><rect x="1133" y="125" width="1" height="12" fill="#52c48c"/><rect x="1132" y="132" width="3" height="2" fill="#52c48c"/><rect x="1137" y="125" width="1" height="23" fill="#52c48c"/><rect x="1136" y="135" width="3" height="4" fill="#52c48c"/><rect x="1141" y="128" width="1" height="17" fill="#52c48c"/><rect x="1140" y="138" width="3" height="2" fill="#52c48c"/><rect x="1145" y="123" width="1" height="17" fill="#f05468"/><rect x="1144" y="137" width="3" height="3" fill="#f05468"/><rect x="1149" y="131" width="1" height="8" fill="#f05468"/><rect x="1148" y="132" width="3" height="5" fill="#f05468"/><rect x="1153" y="122" width="1" height="13" fill="#f05468"/><rect x="1152" y="129" width="3" height="3" fill="#f05468"/><rect x="1157" y="126" width="1" height="9" fill="#52c48c"/><rect x="1156" y="129" width="3" height="5" fill="#52c48c"/><rect x="1161" y="122" width="1" height="13" fill="#f05468"/><rect x="1160" y="132" width="3" height="2" fill="#f05468"/><rect x="1165" y="130" width="1" height="32" fill="#52c48c"/><rect x="1164" y="132" width="3" height="27" fill="#52c48c"/><rect x="1169" y="152" width="1" height="10" fill="#f05468"/><rect x="1168" y="156" width="3" height="3" fill="#f05468"/><rect x="1173" y="144" width="1" height="12" fill="#f05468"/><rect x="1172" y="146" width="3" height="10" fill="#f05468"/><rect x="1177" y="139" width="1" height="10" fill="#f05468"/><rect x="1176" y="140" width="3" height="7" fill="#f05468"/><rect x="1181" y="133" width="1" height="11" fill="#f05468"/><rect x="1180" y="139" width="3" height="1" fill="#f05468"/><rect x="1185" y="131" width="1" height="16" fill="#f05468"/><rect x="1184" y="133" width="3" height="3" fill="#f05468"/><rect x="1189" y="128" width="1" height="12" fill="#52c48c"/><rect x="1188" y="132" width="3" height="2" fill="#52c48c"/><rect x="1193" y="125" width="1" height="25" fill="#52c48c"/><rect x="1192" y="133" width="3" height="17" fill="#52c48c"/><rect x="1197" y="141" width="1" height="9" fill="#f05468"/><rect x="1196" y="147" width="3" height="3" fill="#f05468"/><rect x="1201" y="135" width="1" height="12" fill="#f05468"/><rect x="1200" y="145" width="3" height="2" fill="#f05468"/><rect x="1205" y="136" width="1" height="10" fill="#f05468"/><rect x="1204" y="138" width="3" height="8" fill="#f05468"/><rect x="1209" y="136" width="1" height="38" fill="#52c48c"/><rect x="1208" y="140" width="3" height="25" fill="#52c48c"/><rect x="1213" y="155" width="1" height="14" fill="#52c48c"/><rect x="1212" y="165" width="3" height="1" fill="#52c48c"/><rect x="1217" y="162" width="1" height="27" fill="#52c48c"/><rect x="1216" y="166" width="3" height="21" fill="#52c48c"/><rect x="1221" y="170" width="1" height="17" fill="#f05468"/><rect x="1220" y="174" width="3" height="13" fill="#f05468"/><rect x="1225" y="162" width="1" height="14" fill="#f05468"/><rect x="1224" y="171" width="3" height="2" fill="#f05468"/><rect x="1229" y="167" width="1" height="12" fill="#52c48c"/><rect x="1228" y="170" width="3" height="9" fill="#52c48c"/><rect x="1233" y="158" width="1" height="21" fill="#f05468"/><rect x="1232" y="162" width="3" height="16" fill="#f05468"/><rect x="1237" y="152" width="1" height="16" fill="#52c48c"/><rect x="1236" y="163" width="3" height="5" fill="#52c48c"/></g><path d="M606 139.5h8M609.5 136v7M1070 66.5h8M1073.5 63v7M210 439.5h8M213.5 436v6" stroke="#e0e0e0" stroke-width="1" shape-rendering="crispEdges"/><polyline points="93.5,275.0 97.5,274.5 101.5,274.4 105.5,275.0 109.5,276.4 113.5,276.5 117.5,276.6 121.5,276.7 125.5,278.1 129.5,280.2 133.5,282.0 137.5,282.2 141.5,282.4 145.5,282.5 149.5,284.0 153.5,284.3 157.5,282.0 161.5,282.1 165.5,282.2 169.5,284.2 173.5,285.0 177.5,285.5 181.5,287.9 185.5,280.5 189.5,275.0 193.5,272.7 197.5,272.4 201.5,274.4 205.5,279.1 209.5,284.9 213.5,290.8 217.5,296.5 221.5,301.6 225.5,309.5 229.5,314.8 233.5,318.2 237.5,317.5 241.5,317.6 245.5,316.9 249.5,313.3 253.5,303.8 257.5,298.1 261.5,291.7 265.5,288.0 269.5,283.2 273.5,278.4 277.5,278.2 281.5,279.7 285.5,282.2 289.5,287.6 293.5,289.2 297.5,292.2 301.5,292.8 305.5,296.6 309.5,297.0 313.5,296.3 317.5,296.2 321.5,296.2 325.5,295.2 329.5,291.5 333.5,288.6 337.5,284.7 341.5,283.1 345.5,281.4 349.5,280.2 353.5,271.6 357.5,255.7 361.5,242.2 365.5,231.9 369.5,224.3 373.5,217.9 377.5,213.1 381.5,210.9 385.5,210.1 389.5,210.8 393.5,214.7 397.5,219.0 401.5,224.2 405.5,226.4 409.5,226.8 413.5,226.9 417.5,227.2 421.5,228.0 425.5,227.7 429.5,227.6 433.5,226.7 437.5,231.1 441.5,236.8 445.5,241.3 449.5,245.9 453.5,251.5 457.5,258.5 461.5,263.8 465.5,269.1 469.5,274.3 473.5,275.5 477.5,277.3 481.5,277.7 485.5,277.2 489.5,278.3 493.5,278.4 497.5,281.8 501.5,283.6 505.5,283.6 509.5,284.1 513.5,280.3 517.5,275.8 521.5,271.1 525.5,258.9 529.5,253.6 533.5,252.0 537.5,250.0 541.5,247.6 545.5,244.5 549.5,237.6 553.5,233.6 557.5,228.8 561.5,221.8 565.5,213.1 569.5,202.2 573.5,192.1 577.5,187.6 581.5,180.4 585.5,178.1 589.5,178.4 593.5,177.8 597.5,173.1 601.5,170.2 605.5,156.8 609.5,147.2 613.5,141.5 617.5,138.5 621.5,137.5 625.5,137.2 629.5,138.2 633.5,140.5 637.5,143.3 641.5,145.0 645.5,145.8 649.5,144.5 653.5,142.4 657.5,141.6 661.5,140.1 665.5,138.4 669.5,139.6 673.5,140.5 677.5,137.8 681.5,138.3 685.5,141.2 689.5,143.7 693.5,145.7 697.5,146.8 701.5,148.5 705.5,149.1 709.5,147.3 713.5,144.0 717.5,142.4 721.5,140.9 725.5,139.5 729.5,139.2 733.5,140.3 737.5,140.7 741.5,142.6 745.5,148.2 749.5,152.0 753.5,161.3 757.5,174.7 761.5,180.4 765.5,187.2 769.5,194.2 773.5,199.7 777.5,203.7 781.5,211.6 785.5,213.5 789.5,215.2 793.5,212.4 797.5,208.0 801.5,201.9 805.5,196.3 809.5,189.7 813.5,185.4 817.5,183.4 821.5,180.9 825.5,176.8 829.5,176.3 833.5,175.0 837.5,172.9 841.5,170.8 845.5,169.1 849.5,169.4 853.5,169.5 857.5,170.6 861.5,172.4 865.5,173.1 869.5,177.1 873.5,179.3 877.5,179.8 881.5,179.8 885.5,179.7 889.5,179.6 893.5,179.6 897.5,179.6 901.5,179.5 905.5,181.4 909.5,181.5 913.5,179.2 917.5,175.6 921.5,176.5 925.5,178.2 929.5,178.5 933.5,180.5 937.5,180.9 941.5,181.7 945.5,182.9 949.5,184.9 953.5,185.2 957.5,181.0 961.5,179.0 965.5,178.6 969.5,174.6 973.5,156.9 977.5,147.5 981.5,138.5 985.5,132.3 989.5,126.4 993.5,120.7 997.5,114.5 1001.5,106.6 1005.5,100.7 1009.5,95.9 1013.5,92.6 1017.5,88.8 1021.5,84.3 1025.5,81.7 1029.5,80.2 1033.5,81.9 1037.5,80.2 1041.5,79.4 1045.5,82.8 1049.5,82.5 1053.5,77.0 1057.5,74.3 1061.5,71.9 1065.5,70.2 1069.5,67.6 1073.5,66.7 1077.5,66.4 1081.5,66.5 1085.5,67.8 1089.5,68.6 1093.5,69.6 1097.5,68.4 1101.5,66.8 1105.5,66.6 1109.5,66.4 1113.5,66.2 1117.5,63.8 1121.5,60.0 1125.5,59.1 1129.5,60.9 1133.5,63.4 1137.5,65.2 1141.5,67.6 1145.5,72.0 1149.5,79.9 1153.5,87.6 1157.5,94.6 1161.5,99.7 1165.5,103.0 1169.5,107.0 1173.5,109.0 1177.5,110.6 1181.5,111.8 1185.5,113.9 1189.5,117.4 1193.5,122.1 1197.5,122.5 1201.5,122.7 1205.5,122.6 1209.5,121.1 1213.5,120.2 1217.5,115.4 1221.5,114.6 1225.5,115.0 1229.5,115.8 1233.5,118.7 1237.5,120.9" fill="none" stroke="#e8e81c" stroke-width="1" shape-rendering="crispEdges"/><polyline points="93.5,308.3 97.5,308.4 101.5,308.6 105.5,308.8 109.5,309.1 113.5,309.7 117.5,309.8 121.5,308.2 125.5,306.6 129.5,305.0 133.5,303.7 137.5,303.4 141.5,304.1 145.5,304.9 149.5,305.6 153.5,306.3 157.5,308.0 161.5,310.0 165.5,312.0 169.5,315.0 173.5,317.2 177.5,320.7 181.5,324.7 185.5,329.3 189.5,333.3 193.5,337.1 197.5,340.8 201.5,344.7 205.5,349.1 209.5,353.8 213.5,356.7 217.5,359.6 221.5,361.5 225.5,364.5 229.5,366.0 233.5,366.8 237.5,366.6 241.5,366.6 245.5,366.4 249.5,365.5 253.5,363.1 257.5,361.0 261.5,358.4 265.5,354.1 269.5,349.2 273.5,344.3 277.5,340.6 281.5,337.7 285.5,334.9 289.5,332.2 293.5,331.0 297.5,329.2 301.5,328.6 305.5,327.1 309.5,326.8 313.5,327.4 317.5,327.7 321.5,327.8 325.5,326.9 329.5,325.8 333.5,325.2 337.5,324.0 341.5,323.4 345.5,322.8 349.5,322.4 353.5,320.6 357.5,316.6 361.5,311.9 365.5,307.4 369.5,302.6 373.5,297.8 377.5,293.4 381.5,289.3 385.5,285.5 389.5,281.7 393.5,278.2 397.5,275.4 401.5,272.9 405.5,271.8 409.5,271.3 413.5,271.1 417.5,270.4 421.5,269.8 425.5,270.0 429.5,270.0 433.5,272.3 437.5,275.1 441.5,277.9 445.5,281.3 449.5,284.5 453.5,288.0 457.5,290.4 461.5,292.6 465.5,294.5 469.5,296.3 473.5,298.4 477.5,299.3 481.5,299.5 485.5,299.2 489.5,299.6 493.5,299.6 497.5,300.8 501.5,301.6 505.5,301.5 509.5,301.8 513.5,300.4 517.5,299.3 521.5,298.0 525.5,294.6 529.5,292.0 533.5,289.8 537.5,288.4 541.5,286.6 545.5,284.6 549.5,281.4 553.5,277.3 557.5,274.0 561.5,271.0 565.5,267.1 569.5,262.5 573.5,258.0 577.5,253.3 581.5,247.6 585.5,242.6 589.5,238.0 593.5,234.8 597.5,230.6 601.5,226.8 605.5,222.2 609.5,217.0 613.5,211.3 617.5,205.8 621.5,200.7 625.5,195.9 629.5,193.3 633.5,191.6 637.5,189.7 641.5,188.1 645.5,187.1 649.5,185.8 653.5,184.3 657.5,182.3 661.5,181.1 665.5,179.0 669.5,177.6 673.5,174.8 677.5,172.9 681.5,172.5 685.5,174.2 689.5,176.0 693.5,178.0 697.5,180.2 701.5,181.7 705.5,184.3 709.5,185.9 713.5,187.3 717.5,188.5 721.5,190.1 725.5,191.8 729.5,195.3 733.5,199.4 737.5,204.0 741.5,208.8 745.5,213.6 749.5,216.6 753.5,220.6 757.5,224.6 761.5,227.2 765.5,229.8 769.5,232.5 773.5,234.4 777.5,235.7 781.5,237.4 785.5,237.9 789.5,238.4 793.5,237.5 797.5,236.5 801.5,235.1 805.5,233.5 809.5,231.0 813.5,228.4 817.5,225.4 821.5,221.6 825.5,217.9 829.5,216.1 833.5,214.0 837.5,212.2 841.5,209.5 845.5,206.9 849.5,204.2 853.5,201.7 857.5,199.9 861.5,198.2 865.5,196.3 869.5,194.2 873.5,193.5 877.5,192.9 881.5,192.7 885.5,192.8 889.5,193.3 893.5,193.1 897.5,193.0 901.5,193.8 905.5,194.8 909.5,194.8 913.5,195.7 917.5,197.5 921.5,198.9 925.5,199.9 929.5,201.6 933.5,203.0 937.5,204.2 941.5,204.6 945.5,204.9 949.5,205.5 953.5,206.1 957.5,205.3 961.5,204.7 965.5,204.5 969.5,203.3 973.5,200.2 977.5,197.5 981.5,194.3 985.5,191.6 989.5,188.6 993.5,184.9 997.5,179.9 1001.5,175.2 1005.5,171.2 1009.5,166.0 1013.5,161.4 1017.5,155.9 1021.5,150.9 1025.5,147.1 1029.5,142.6 1033.5,137.0 1037.5,133.6 1041.5,129.3 1045.5,124.3 1049.5,119.6 1053.5,117.2 1057.5,114.4 1061.5,111.7 1065.5,108.4 1069.5,104.6 1073.5,101.5 1077.5,99.2 1081.5,98.0 1085.5,96.6 1089.5,95.7 1093.5,95.4 1097.5,96.0 1101.5,97.0 1105.5,97.1 1109.5,97.2 1113.5,97.8 1117.5,99.1 1121.5,101.6 1125.5,103.9 1129.5,106.2 1133.5,108.8 1137.5,111.3 1141.5,113.9 1145.5,116.6 1149.5,119.6 1153.5,122.1 1157.5,124.6 1161.5,126.4 1165.5,129.5 1169.5,132.2 1173.5,133.7 1177.5,134.6 1181.5,135.3 1185.5,136.0 1189.5,137.0 1193.5,138.8 1197.5,139.4 1201.5,139.2 1205.5,139.1 1209.5,140.7 1213.5,142.3 1217.5,144.7 1221.5,146.4 1225.5,148.1 1229.5,150.5 1233.5,152.1 1237.5,153.8" fill="none" stroke="#e8e8e8" stroke-width="1" shape-rendering="crispEdges"/><polyline points="93.5,341.0 97.5,341.1 101.5,341.2 105.5,341.4 109.5,343.0 113.5,343.8 117.5,343.5 121.5,339.6 125.5,335.8 129.5,330.9 133.5,326.0 137.5,324.2 141.5,326.3 145.5,326.6 149.5,327.4 153.5,329.6 157.5,335.1 161.5,338.9 165.5,342.5 169.5,346.1 173.5,350.2 177.5,355.7 181.5,361.1 185.5,378.3 189.5,391.7 193.5,401.5 197.5,409.2 201.5,415.1 205.5,419.0 209.5,422.8 213.5,422.6 217.5,422.8 221.5,421.4 225.5,419.5 229.5,417.1 233.5,415.3 237.5,415.7 241.5,415.6 245.5,415.9 249.5,417.8 253.5,422.5 257.5,424.0 261.5,425.1 265.5,420.3 269.5,415.2 273.5,410.1 277.5,403.1 281.5,395.8 285.5,387.7 289.5,376.8 293.5,372.8 297.5,366.2 301.5,364.4 305.5,357.6 309.5,356.6 313.5,358.5 317.5,359.2 321.5,359.3 325.5,358.7 329.5,360.1 333.5,361.8 337.5,363.3 341.5,363.8 345.5,364.1 349.5,364.6 353.5,369.6 357.5,377.5 361.5,381.7 365.5,382.9 369.5,381.0 373.5,377.7 377.5,373.8 381.5,367.7 385.5,360.9 389.5,352.7 393.5,341.8 397.5,331.8 401.5,321.5 405.5,317.3 409.5,315.7 413.5,315.3 417.5,313.7 421.5,311.6 425.5,312.2 429.5,312.4 433.5,317.9 437.5,319.0 441.5,318.9 445.5,321.3 449.5,323.2 453.5,324.5 457.5,322.4 461.5,321.4 465.5,319.8 469.5,318.3 473.5,321.2 477.5,321.4 481.5,321.2 485.5,321.2 489.5,320.9 493.5,320.8 497.5,319.8 501.5,319.6 505.5,319.5 509.5,319.6 513.5,320.4 517.5,322.7 521.5,325.0 525.5,330.4 529.5,330.3 533.5,327.5 537.5,326.8 541.5,325.7 545.5,324.7 549.5,325.2 553.5,321.1 557.5,319.2 561.5,320.1 565.5,321.1 569.5,322.7 573.5,323.9 577.5,319.0 581.5,314.8 585.5,307.1 589.5,297.5 593.5,291.7 597.5,288.0 601.5,283.4 605.5,287.7 609.5,286.8 613.5,281.1 617.5,273.1 621.5,264.0 625.5,254.6 629.5,248.4 633.5,242.8 637.5,236.1 641.5,231.2 645.5,228.5 649.5,227.1 653.5,226.1 657.5,222.9 661.5,222.2 665.5,219.7 669.5,215.6 673.5,209.1 677.5,207.9 681.5,206.7 685.5,207.2 689.5,208.2 693.5,210.4 697.5,213.6 701.5,214.9 705.5,219.4 709.5,224.5 713.5,230.5 717.5,234.7 721.5,239.3 725.5,244.0 729.5,251.3 733.5,258.4 737.5,267.2 741.5,275.0 745.5,279.0 749.5,281.2 753.5,280.0 757.5,274.4 761.5,274.1 765.5,272.4 769.5,270.8 773.5,269.1 777.5,267.6 781.5,263.2 785.5,262.2 789.5,261.5 793.5,262.7 797.5,265.1 801.5,268.3 805.5,270.7 809.5,272.3 813.5,271.5 817.5,267.3 821.5,262.3 825.5,258.9 829.5,256.0 833.5,253.0 837.5,251.5 841.5,248.1 845.5,244.8 849.5,239.0 853.5,233.9 857.5,229.2 861.5,224.1 865.5,219.6 869.5,211.2 873.5,207.7 877.5,206.0 881.5,205.7 885.5,206.0 889.5,207.0 893.5,206.6 897.5,206.4 901.5,208.2 905.5,208.2 909.5,208.1 913.5,212.2 917.5,219.4 921.5,221.3 925.5,221.5 929.5,224.7 933.5,225.5 937.5,227.5 941.5,227.5 945.5,227.0 949.5,226.2 953.5,227.1 957.5,229.5 961.5,230.4 965.5,230.4 969.5,232.0 973.5,243.4 977.5,247.5 981.5,250.0 985.5,250.9 989.5,250.9 993.5,249.0 997.5,245.3 1001.5,243.8 1005.5,241.7 1009.5,236.0 1013.5,230.2 1017.5,222.9 1021.5,217.5 1025.5,212.4 1029.5,205.1 1033.5,192.1 1037.5,186.9 1041.5,179.2 1045.5,165.8 1049.5,156.7 1053.5,157.5 1057.5,154.5 1061.5,151.5 1065.5,146.5 1069.5,141.7 1073.5,136.2 1077.5,132.1 1081.5,129.5 1085.5,125.3 1089.5,122.8 1093.5,121.2 1097.5,123.6 1101.5,127.1 1105.5,127.6 1109.5,128.0 1113.5,129.4 1117.5,134.5 1121.5,143.3 1125.5,148.6 1129.5,151.6 1133.5,154.2 1137.5,157.4 1141.5,160.1 1145.5,161.2 1149.5,159.3 1153.5,156.7 1157.5,154.6 1161.5,153.1 1165.5,156.1 1169.5,157.5 1173.5,158.3 1177.5,158.6 1181.5,158.8 1185.5,158.2 1189.5,156.6 1193.5,155.5 1197.5,156.3 1201.5,155.7 1205.5,155.6 1209.5,160.3 1213.5,164.4 1217.5,174.1 1221.5,178.2 1225.5,181.3 1229.5,185.1 1233.5,185.5 1237.5,186.6" fill="none" stroke="#e030f0" stroke-width="1" shape-rendering="crispEdges"/><g shape-rendering="crispEdges"><rect x="93" y="552" width="1" height="26" fill="#f05468"/><rect x="97" y="553" width="1" height="25" fill="#f05468"/><rect x="101" y="552" width="1" height="26" fill="#f05468"/><rect x="105" y="560" width="1" height="18" fill="#f05468"/><rect x="109" y="572" width="1" height="6" fill="#f05468"/><rect x="113" y="578" width="1" height="2" fill="#52c48c"/><rect x="117" y="578" width="1" height="5" fill="#52c48c"/><rect x="121" y="578" width="1" height="4" fill="#52c48c"/><rect x="125" y="577" width="1" height="1" fill="#f05468"/><rect x="129" y="573" width="1" height="5" fill="#f05468"/><rect x="133" y="575" width="1" height="3" fill="#f05468"/><rect x="137" y="577" width="1" height="1" fill="#f05468"/><rect x="141" y="578" width="1" height="1" fill="#52c48c"/><rect x="145" y="578" width="1" height="1" fill="#52c48c"/><rect x="149" y="578" width="1" height="2" fill="#52c48c"/><rect x="153" y="578" width="1" height="4" fill="#52c48c"/><rect x="157" y="578" width="1" height="13" fill="#52c48c"/><rect x="161" y="578" width="1" height="15" fill="#52c48c"/><rect x="165" y="578" width="1" height="17" fill="#52c48c"/><rect x="169" y="578" width="1" height="16" fill="#52c48c"/><rect x="173" y="578" width="1" height="19" fill="#52c48c"/><rect x="177" y="578" width="1" height="24" fill="#52c48c"/><rect x="181" y="578" width="1" height="27" fill="#52c48c"/><rect x="185" y="578" width="1" height="42" fill="#52c48c"/><rect x="189" y="578" width="1" height="48" fill="#52c48c"/><rect x="193" y="578" width="1" height="47" fill="#52c48c"/><rect x="197" y="578" width="1" height="42" fill="#52c48c"/><rect x="201" y="578" width="1" height="34" fill="#52c48c"/><rect x="205" y="578" width="1" height="26" fill="#52c48c"/><rect x="209" y="578" width="1" height="21" fill="#52c48c"/><rect x="213" y="578" width="1" height="5" fill="#52c48c"/><rect x="217" y="574" width="1" height="4" fill="#f05468"/><rect x="221" y="559" width="1" height="19" fill="#f05468"/><rect x="225" y="556" width="1" height="22" fill="#f05468"/><rect x="229" y="546" width="1" height="32" fill="#f05468"/><rect x="233" y="536" width="1" height="42" fill="#f05468"/><rect x="237" y="531" width="1" height="47" fill="#f05468"/><rect x="241" y="529" width="1" height="49" fill="#f05468"/><rect x="245" y="529" width="1" height="49" fill="#f05468"/><rect x="249" y="526" width="1" height="52" fill="#f05468"/><rect x="253" y="518" width="1" height="60" fill="#f05468"/><rect x="257" y="523" width="1" height="55" fill="#f05468"/><rect x="261" y="526" width="1" height="52" fill="#f05468"/><rect x="265" y="533" width="1" height="45" fill="#f05468"/><rect x="269" y="534" width="1" height="44" fill="#f05468"/><rect x="273" y="536" width="1" height="42" fill="#f05468"/><rect x="277" y="548" width="1" height="30" fill="#f05468"/><rect x="281" y="562" width="1" height="16" fill="#f05468"/><rect x="285" y="573" width="1" height="5" fill="#f05468"/><rect x="289" y="578" width="1" height="6" fill="#52c48c"/><rect x="293" y="578" width="1" height="13" fill="#52c48c"/><rect x="297" y="578" width="1" height="15" fill="#52c48c"/><rect x="301" y="578" width="1" height="17" fill="#52c48c"/><rect x="305" y="578" width="1" height="18" fill="#52c48c"/><rect x="309" y="578" width="1" height="18" fill="#52c48c"/><rect x="313" y="578" width="1" height="20" fill="#52c48c"/><rect x="317" y="578" width="1" height="18" fill="#52c48c"/><rect x="321" y="578" width="1" height="14" fill="#52c48c"/><rect x="325" y="578" width="1" height="3" fill="#52c48c"/><rect x="329" y="566" width="1" height="12" fill="#f05468"/><rect x="333" y="554" width="1" height="24" fill="#f05468"/><rect x="337" y="549" width="1" height="29" fill="#f05468"/><rect x="341" y="551" width="1" height="27" fill="#f05468"/><rect x="345" y="555" width="1" height="23" fill="#f05468"/><rect x="349" y="556" width="1" height="22" fill="#f05468"/><rect x="353" y="545" width="1" height="33" fill="#f05468"/><rect x="357" y="532" width="1" height="46" fill="#f05468"/><rect x="361" y="526" width="1" height="52" fill="#f05468"/><rect x="365" y="527" width="1" height="51" fill="#f05468"/><rect x="369" y="533" width="1" height="45" fill="#f05468"/><rect x="373" y="539" width="1" height="39" fill="#f05468"/><rect x="377" y="548" width="1" height="30" fill="#f05468"/><rect x="381" y="560" width="1" height="18" fill="#f05468"/><rect x="385" y="571" width="1" height="7" fill="#f05468"/><rect x="389" y="578" width="1" height="3" fill="#52c48c"/><rect x="393" y="578" width="1" height="15" fill="#52c48c"/><rect x="397" y="578" width="1" height="25" fill="#52c48c"/><rect x="401" y="578" width="1" height="32" fill="#52c48c"/><rect x="405" y="578" width="1" height="39" fill="#52c48c"/><rect x="409" y="578" width="1" height="39" fill="#52c48c"/><rect x="413" y="578" width="1" height="36" fill="#52c48c"/><rect x="417" y="578" width="1" height="32" fill="#52c48c"/><rect x="421" y="578" width="1" height="31" fill="#52c48c"/><rect x="425" y="578" width="1" height="36" fill="#52c48c"/><rect x="429" y="578" width="1" height="35" fill="#52c48c"/><rect x="433" y="578" width="1" height="37" fill="#52c48c"/><rect x="437" y="578" width="1" height="32" fill="#52c48c"/><rect x="441" y="578" width="1" height="26" fill="#52c48c"/><rect x="445" y="578" width="1" height="29" fill="#52c48c"/><rect x="449" y="578" width="1" height="29" fill="#52c48c"/><rect x="453" y="578" width="1" height="29" fill="#52c48c"/><rect x="457" y="578" width="1" height="21" fill="#52c48c"/><rect x="461" y="578" width="1" height="16" fill="#52c48c"/><rect x="465" y="578" width="1" height="11" fill="#52c48c"/><rect x="469" y="578" width="1" height="9" fill="#52c48c"/><rect x="473" y="578" width="1" height="13" fill="#52c48c"/><rect x="477" y="578" width="1" height="9" fill="#52c48c"/><rect x="481" y="577" width="1" height="1" fill="#f05468"/><rect x="485" y="572" width="1" height="6" fill="#f05468"/><rect x="489" y="570" width="1" height="8" fill="#f05468"/><rect x="493" y="566" width="1" height="12" fill="#f05468"/><rect x="497" y="570" width="1" height="8" fill="#f05468"/><rect x="501" y="574" width="1" height="4" fill="#f05468"/><rect x="505" y="576" width="1" height="2" fill="#f05468"/><rect x="509" y="577" width="1" height="1" fill="#f05468"/><rect x="513" y="568" width="1" height="10" fill="#f05468"/><rect x="517" y="561" width="1" height="17" fill="#f05468"/><rect x="521" y="555" width="1" height="23" fill="#f05468"/><rect x="525" y="543" width="1" height="35" fill="#f05468"/><rect x="529" y="543" width="1" height="35" fill="#f05468"/><rect x="533" y="550" width="1" height="28" fill="#f05468"/><rect x="537" y="556" width="1" height="22" fill="#f05468"/><rect x="541" y="560" width="1" height="18" fill="#f05468"/><rect x="545" y="561" width="1" height="17" fill="#f05468"/><rect x="549" y="554" width="1" height="24" fill="#f05468"/><rect x="553" y="552" width="1" height="26" fill="#f05468"/><rect x="557" y="552" width="1" height="26" fill="#f05468"/><rect x="561" y="549" width="1" height="29" fill="#f05468"/><rect x="565" y="545" width="1" height="33" fill="#f05468"/><rect x="569" y="539" width="1" height="39" fill="#f05468"/><rect x="573" y="536" width="1" height="42" fill="#f05468"/><rect x="577" y="543" width="1" height="35" fill="#f05468"/><rect x="581" y="542" width="1" height="36" fill="#f05468"/><rect x="585" y="549" width="1" height="29" fill="#f05468"/><rect x="589" y="560" width="1" height="18" fill="#f05468"/><rect x="593" y="570" width="1" height="8" fill="#f05468"/><rect x="597" y="568" width="1" height="10" fill="#f05468"/><rect x="601" y="570" width="1" height="8" fill="#f05468"/><rect x="605" y="556" width="1" height="22" fill="#f05468"/><rect x="609" y="551" width="1" height="27" fill="#f05468"/><rect x="613" y="551" width="1" height="27" fill="#f05468"/><rect x="617" y="556" width="1" height="22" fill="#f05468"/><rect x="621" y="563" width="1" height="15" fill="#f05468"/><rect x="625" y="569" width="1" height="9" fill="#f05468"/><rect x="629" y="578" width="1" height="7" fill="#52c48c"/><rect x="633" y="578" width="1" height="24" fill="#52c48c"/><rect x="637" y="578" width="1" height="33" fill="#52c48c"/><rect x="641" y="578" width="1" height="37" fill="#52c48c"/><rect x="645" y="578" width="1" height="38" fill="#52c48c"/><rect x="649" y="578" width="1" height="30" fill="#52c48c"/><rect x="653" y="578" width="1" height="21" fill="#52c48c"/><rect x="657" y="578" width="1" height="16" fill="#52c48c"/><rect x="661" y="578" width="1" height="13" fill="#52c48c"/><rect x="665" y="578" width="1" height="9" fill="#52c48c"/><rect x="669" y="578" width="1" height="14" fill="#52c48c"/><rect x="673" y="578" width="1" height="9" fill="#52c48c"/><rect x="677" y="578" width="1" height="4" fill="#52c48c"/><rect x="681" y="578" width="1" height="15" fill="#52c48c"/><rect x="685" y="578" width="1" height="21" fill="#52c48c"/><rect x="689" y="578" width="1" height="26" fill="#52c48c"/><rect x="693" y="578" width="1" height="33" fill="#52c48c"/><rect x="697" y="578" width="1" height="38" fill="#52c48c"/><rect x="701" y="578" width="1" height="36" fill="#52c48c"/><rect x="705" y="578" width="1" height="41" fill="#52c48c"/><rect x="709" y="578" width="1" height="45" fill="#52c48c"/><rect x="713" y="578" width="1" height="50" fill="#52c48c"/><rect x="717" y="578" width="1" height="48" fill="#52c48c"/><rect x="721" y="578" width="1" height="45" fill="#52c48c"/><rect x="725" y="578" width="1" height="42" fill="#52c48c"/><rect x="729" y="578" width="1" height="42" fill="#52c48c"/><rect x="733" y="578" width="1" height="43" fill="#52c48c"/><rect x="737" y="578" width="1" height="45" fill="#52c48c"/><rect x="741" y="578" width="1" height="46" fill="#52c48c"/><rect x="745" y="578" width="1" height="40" fill="#52c48c"/><rect x="749" y="578" width="1" height="27" fill="#52c48c"/><rect x="753" y="578" width="1" height="17" fill="#52c48c"/><rect x="757" y="578" width="1" height="5" fill="#52c48c"/><rect x="761" y="578" width="1" height="1" fill="#52c48c"/><rect x="765" y="573" width="1" height="5" fill="#f05468"/><rect x="769" y="572" width="1" height="6" fill="#f05468"/><rect x="773" y="568" width="1" height="10" fill="#f05468"/><rect x="777" y="564" width="1" height="14" fill="#f05468"/><rect x="781" y="560" width="1" height="18" fill="#f05468"/><rect x="785" y="556" width="1" height="22" fill="#f05468"/><rect x="789" y="557" width="1" height="21" fill="#f05468"/><rect x="793" y="553" width="1" height="25" fill="#f05468"/><rect x="797" y="546" width="1" height="32" fill="#f05468"/><rect x="801" y="540" width="1" height="38" fill="#f05468"/><rect x="805" y="538" width="1" height="40" fill="#f05468"/><rect x="809" y="537" width="1" height="41" fill="#f05468"/><rect x="813" y="540" width="1" height="38" fill="#f05468"/><rect x="817" y="545" width="1" height="33" fill="#f05468"/><rect x="821" y="546" width="1" height="32" fill="#f05468"/><rect x="825" y="545" width="1" height="33" fill="#f05468"/><rect x="829" y="556" width="1" height="22" fill="#f05468"/><rect x="833" y="561" width="1" height="17" fill="#f05468"/><rect x="837" y="564" width="1" height="14" fill="#f05468"/><rect x="841" y="564" width="1" height="14" fill="#f05468"/><rect x="845" y="564" width="1" height="14" fill="#f05468"/><rect x="849" y="567" width="1" height="11" fill="#f05468"/><rect x="853" y="569" width="1" height="9" fill="#f05468"/><rect x="857" y="574" width="1" height="4" fill="#f05468"/><rect x="861" y="578" width="1" height="1" fill="#52c48c"/><rect x="865" y="578" width="1" height="1" fill="#52c48c"/><rect x="869" y="578" width="1" height="1" fill="#52c48c"/><rect x="873" y="578" width="1" height="7" fill="#52c48c"/><rect x="877" y="578" width="1" height="8" fill="#52c48c"/><rect x="881" y="578" width="1" height="9" fill="#52c48c"/><rect x="885" y="578" width="1" height="11" fill="#52c48c"/><rect x="889" y="578" width="1" height="13" fill="#52c48c"/><rect x="893" y="578" width="1" height="11" fill="#52c48c"/><rect x="897" y="578" width="1" height="11" fill="#52c48c"/><rect x="901" y="578" width="1" height="14" fill="#52c48c"/><rect x="905" y="578" width="1" height="13" fill="#52c48c"/><rect x="909" y="578" width="1" height="14" fill="#52c48c"/><rect x="913" y="578" width="1" height="19" fill="#52c48c"/><rect x="917" y="578" width="1" height="25" fill="#52c48c"/><rect x="921" y="578" width="1" height="23" fill="#52c48c"/><rect x="925" y="578" width="1" height="16" fill="#52c48c"/><rect x="929" y="578" width="1" height="18" fill="#52c48c"/><rect x="933" y="578" width="1" height="15" fill="#52c48c"/><rect x="937" y="578" width="1" height="14" fill="#52c48c"/><rect x="941" y="578" width="1" height="7" fill="#52c48c"/><rect x="945" y="575" width="1" height="3" fill="#f05468"/><rect x="949" y="572" width="1" height="6" fill="#f05468"/><rect x="953" y="576" width="1" height="2" fill="#f05468"/><rect x="957" y="563" width="1" height="15" fill="#f05468"/><rect x="961" y="559" width="1" height="19" fill="#f05468"/><rect x="965" y="562" width="1" height="16" fill="#f05468"/><rect x="969" y="558" width="1" height="20" fill="#f05468"/><rect x="973" y="537" width="1" height="41" fill="#f05468"/><rect x="977" y="532" width="1" height="46" fill="#f05468"/><rect x="981" y="531" width="1" height="47" fill="#f05468"/><rect x="985" y="535" width="1" height="43" fill="#f05468"/><rect x="989" y="540" width="1" height="38" fill="#f05468"/><rect x="993" y="544" width="1" height="34" fill="#f05468"/><rect x="997" y="543" width="1" height="35" fill="#f05468"/><rect x="1001" y="542" width="1" height="36" fill="#f05468"/><rect x="1005" y="546" width="1" height="32" fill="#f05468"/><rect x="1009" y="548" width="1" height="30" fill="#f05468"/><rect x="1013" y="554" width="1" height="24" fill="#f05468"/><rect x="1017" y="554" width="1" height="24" fill="#f05468"/><rect x="1021" y="555" width="1" height="23" fill="#f05468"/><rect x="1025" y="562" width="1" height="16" fill="#f05468"/><rect x="1029" y="567" width="1" height="11" fill="#f05468"/><rect x="1033" y="568" width="1" height="10" fill="#f05468"/><rect x="1037" y="572" width="1" height="6" fill="#f05468"/><rect x="1041" y="573" width="1" height="5" fill="#f05468"/><rect x="1045" y="573" width="1" height="5" fill="#f05468"/><rect x="1049" y="571" width="1" height="7" fill="#f05468"/><rect x="1053" y="570" width="1" height="8" fill="#f05468"/><rect x="1057" y="574" width="1" height="4" fill="#f05468"/><rect x="1061" y="577" width="1" height="1" fill="#f05468"/><rect x="1065" y="578" width="1" height="1" fill="#52c48c"/><rect x="1069" y="576" width="1" height="2" fill="#f05468"/><rect x="1073" y="578" width="1" height="1" fill="#52c48c"/><rect x="1077" y="578" width="1" height="6" fill="#52c48c"/><rect x="1081" y="578" width="1" height="15" fill="#52c48c"/><rect x="1085" y="578" width="1" height="21" fill="#52c48c"/><rect x="1089" y="578" width="1" height="27" fill="#52c48c"/><rect x="1093" y="578" width="1" height="36" fill="#52c48c"/><rect x="1097" y="578" width="1" height="43" fill="#52c48c"/><rect x="1101" y="578" width="1" height="47" fill="#52c48c"/><rect x="1105" y="578" width="1" height="46" fill="#52c48c"/><rect x="1109" y="578" width="1" height="41" fill="#52c48c"/><rect x="1113" y="578" width="1" height="37" fill="#52c48c"/><rect x="1117" y="578" width="1" height="41" fill="#52c48c"/><rect x="1121" y="578" width="1" height="48" fill="#52c48c"/><rect x="1125" y="578" width="1" height="46" fill="#52c48c"/><rect x="1129" y="578" width="1" height="39" fill="#52c48c"/><rect x="1133" y="578" width="1" height="34" fill="#52c48c"/><rect x="1137" y="578" width="1" height="31" fill="#52c48c"/><rect x="1141" y="578" width="1" height="28" fill="#52c48c"/><rect x="1145" y="578" width="1" height="23" fill="#52c48c"/><rect x="1149" y="578" width="1" height="17" fill="#52c48c"/><rect x="1153" y="578" width="1" height="11" fill="#52c48c"/><rect x="1157" y="578" width="1" height="8" fill="#52c48c"/><rect x="1161" y="578" width="1" height="5" fill="#52c48c"/><rect x="1165" y="578" width="1" height="13" fill="#52c48c"/><rect x="1169" y="578" width="1" height="16" fill="#52c48c"/><rect x="1173" y="578" width="1" height="13" fill="#52c48c"/><rect x="1177" y="578" width="1" height="8" fill="#52c48c"/><rect x="1181" y="578" width="1" height="3" fill="#52c48c"/><rect x="1185" y="575" width="1" height="3" fill="#f05468"/><rect x="1189" y="572" width="1" height="6" fill="#f05468"/><rect x="1193" y="576" width="1" height="2" fill="#f05468"/><rect x="1197" y="577" width="1" height="1" fill="#f05468"/><rect x="1201" y="577" width="1" height="1" fill="#f05468"/><rect x="1205" y="574" width="1" height="4" fill="#f05468"/><rect x="1209" y="578" width="1" height="4" fill="#52c48c"/><rect x="1213" y="578" width="1" height="9" fill="#52c48c"/><rect x="1217" y="578" width="1" height="20" fill="#52c48c"/><rect x="1221" y="578" width="1" height="20" fill="#52c48c"/><rect x="1225" y="578" width="1" height="18" fill="#52c48c"/><rect x="1229" y="578" width="1" height="18" fill="#52c48c"/><rect x="1233" y="578" width="1" height="10" fill="#52c48c"/><rect x="1237" y="578" width="1" height="6" fill="#52c48c"/></g><polyline points="93.5,585.2 97.5,582.9 101.5,579.1 105.5,580.5 109.5,586.1 113.5,590.1 117.5,592.6 121.5,592.7 125.5,590.1 129.5,587.4 133.5,587.7 137.5,588.9 141.5,590.2 145.5,589.8 149.5,590.9 153.5,592.5 157.5,598.3 161.5,601.4 165.5,604.4 169.5,606.0 173.5,610.1 177.5,615.1 181.5,620.0 185.5,632.7 189.5,642.2 193.5,647.5 197.5,650.0 201.5,650.5 205.5,649.8 209.5,650.0 213.5,642.4 217.5,637.1 221.5,627.4 225.5,623.5 229.5,614.2 233.5,604.0 237.5,595.3 241.5,588.5 245.5,582.4 249.5,574.0 253.5,563.0 257.5,558.3 261.5,553.6 265.5,551.3 269.5,546.5 273.5,542.1 277.5,544.6 281.5,549.5 285.5,554.4 289.5,560.3 293.5,565.5 297.5,568.3 301.5,571.8 305.5,574.2 309.5,576.6 313.5,580.1 317.5,581.1 321.5,580.8 325.5,575.7 329.5,566.6 333.5,557.6 337.5,551.7 341.5,549.2 345.5,548.1 349.5,546.0 353.5,536.5 357.5,524.0 361.5,514.4 365.5,508.6 369.5,506.0 373.5,504.5 377.5,505.2 381.5,508.9 385.5,513.5 389.5,518.8 393.5,526.6 397.5,534.8 401.5,542.1 405.5,550.8 409.5,555.3 413.5,558.8 417.5,560.4 421.5,563.9 425.5,571.1 429.5,574.6 433.5,580.6 437.5,581.7 441.5,582.4 445.5,587.1 449.5,590.7 453.5,594.5 457.5,593.0 461.5,592.6 465.5,591.8 469.5,591.7 473.5,595.6 477.5,594.5 481.5,589.6 485.5,586.4 489.5,584.3 493.5,580.6 497.5,581.9 501.5,583.1 505.5,584.0 509.5,584.3 513.5,578.8 517.5,572.8 521.5,567.4 525.5,556.7 529.5,552.3 533.5,552.4 537.5,552.8 541.5,552.2 545.5,550.6 549.5,544.4 553.5,539.8 557.5,536.5 561.5,531.7 565.5,525.5 569.5,517.4 573.5,511.0 577.5,509.9 581.5,504.8 585.5,505.0 589.5,507.8 593.5,512.1 597.5,509.8 601.5,510.0 605.5,500.1 609.5,494.2 613.5,491.1 617.5,490.8 621.5,492.4 625.5,494.3 629.5,502.8 633.5,514.7 637.5,523.3 641.5,529.6 645.5,535.3 649.5,534.6 653.5,532.8 657.5,532.6 661.5,532.4 665.5,531.4 669.5,535.9 673.5,534.7 677.5,532.4 681.5,539.6 685.5,545.5 689.5,551.4 693.5,558.6 697.5,566.1 701.5,569.7 705.5,577.5 709.5,584.9 713.5,593.9 717.5,598.7 721.5,602.8 725.5,606.4 729.5,612.0 733.5,617.5 737.5,624.5 741.5,630.3 745.5,632.2 749.5,629.4 753.5,626.3 757.5,620.8 761.5,618.6 765.5,615.5 769.5,614.1 773.5,611.1 777.5,607.0 781.5,603.1 785.5,598.5 789.5,596.2 793.5,590.7 797.5,583.5 801.5,576.0 805.5,570.0 809.5,564.1 813.5,561.0 817.5,559.3 821.5,555.6 825.5,551.0 829.5,553.9 833.5,554.4 837.5,553.8 841.5,552.0 845.5,550.6 849.5,550.5 853.5,550.3 857.5,552.6 861.5,554.9 865.5,554.6 869.5,555.0 873.5,559.2 877.5,560.5 881.5,562.1 885.5,564.8 889.5,567.4 893.5,567.6 897.5,569.0 901.5,572.1 905.5,573.6 909.5,575.8 913.5,580.4 917.5,586.8 921.5,588.2 925.5,587.0 929.5,590.2 933.5,590.4 937.5,591.9 941.5,589.1 945.5,583.9 949.5,581.5 953.5,583.2 957.5,575.1 961.5,570.8 965.5,570.2 969.5,565.4 973.5,550.2 977.5,542.1 981.5,535.3 985.5,532.2 989.5,529.9 993.5,527.3 997.5,523.0 1001.5,517.7 1005.5,515.9 1009.5,513.1 1013.5,513.1 1017.5,510.1 1021.5,507.9 1025.5,509.4 1029.5,510.2 1033.5,509.4 1037.5,511.0 1041.5,510.8 1045.5,510.4 1049.5,508.3 1053.5,507.1 1057.5,508.3 1061.5,509.9 1065.5,510.4 1069.5,509.2 1073.5,510.4 1077.5,514.1 1081.5,520.1 1085.5,526.0 1089.5,532.1 1093.5,541.3 1097.5,550.0 1101.5,558.1 1105.5,563.1 1109.5,566.1 1113.5,568.5 1117.5,575.6 1121.5,584.9 1125.5,589.7 1129.5,591.5 1133.5,593.0 1137.5,595.3 1141.5,597.3 1145.5,597.8 1149.5,596.9 1153.5,595.2 1157.5,594.9 1161.5,594.0 1165.5,599.8 1169.5,603.3 1173.5,603.2 1177.5,601.5 1181.5,599.5 1185.5,596.3 1189.5,593.7 1193.5,595.6 1197.5,596.1 1201.5,595.8 1205.5,593.6 1209.5,598.4 1213.5,602.3 1217.5,610.1 1221.5,612.7 1225.5,613.6 1229.5,615.9 1233.5,613.0 1237.5,611.9" fill="none" stroke="#e8e8e8" stroke-width="1" shape-rendering="crispEdges"/><polyline points="93.5,598.4 97.5,595.3 101.5,592.1 105.5,589.8 109.5,589.0 113.5,589.3 117.5,589.9 121.5,590.5 125.5,590.4 129.5,589.8 133.5,589.4 137.5,589.3 141.5,589.5 145.5,589.5 149.5,589.8 153.5,590.4 157.5,591.9 161.5,593.8 165.5,596.0 169.5,598.0 173.5,600.4 177.5,603.3 181.5,606.7 185.5,611.9 189.5,617.9 193.5,623.8 197.5,629.1 201.5,633.4 205.5,636.6 209.5,639.3 213.5,639.9 217.5,639.4 221.5,637.0 225.5,634.3 229.5,630.3 233.5,625.0 237.5,619.1 241.5,612.9 245.5,606.8 249.5,600.3 253.5,592.8 257.5,585.9 261.5,579.5 265.5,573.8 269.5,568.4 273.5,563.1 277.5,559.4 281.5,557.4 285.5,556.8 289.5,557.5 293.5,559.1 297.5,561.0 301.5,563.1 305.5,565.3 309.5,567.6 313.5,570.1 317.5,572.3 321.5,574.0 325.5,574.3 329.5,572.8 333.5,569.8 337.5,566.1 341.5,562.8 345.5,559.8 349.5,557.1 353.5,553.0 357.5,547.2 361.5,540.6 365.5,534.2 369.5,528.6 373.5,523.7 377.5,520.0 381.5,517.8 385.5,517.0 389.5,517.3 393.5,519.2 397.5,522.3 401.5,526.3 405.5,531.2 409.5,536.0 413.5,540.6 417.5,544.5 421.5,548.4 425.5,552.9 429.5,557.3 433.5,561.9 437.5,565.9 441.5,569.2 445.5,572.8 449.5,576.4 453.5,580.0 457.5,582.6 461.5,584.6 465.5,586.0 469.5,587.2 473.5,588.8 477.5,590.0 481.5,589.9 485.5,589.2 489.5,588.2 493.5,586.7 497.5,585.7 501.5,585.2 505.5,585.0 509.5,584.9 513.5,583.6 517.5,581.5 521.5,578.7 525.5,574.3 529.5,569.9 533.5,566.4 537.5,563.7 541.5,561.4 545.5,559.2 549.5,556.2 553.5,553.0 557.5,549.7 561.5,546.1 565.5,542.0 569.5,537.0 573.5,531.8 577.5,527.4 581.5,522.9 585.5,519.3 589.5,517.0 593.5,516.0 597.5,514.8 601.5,513.8 605.5,511.1 609.5,507.7 613.5,504.4 617.5,501.7 621.5,499.8 625.5,498.7 629.5,499.5 633.5,502.6 637.5,506.7 641.5,511.3 645.5,516.1 649.5,519.8 653.5,522.4 657.5,524.4 661.5,526.0 665.5,527.1 669.5,528.9 673.5,530.0 677.5,530.5 681.5,532.3 685.5,535.0 689.5,538.3 693.5,542.3 697.5,547.1 701.5,551.6 705.5,556.8 709.5,562.4 713.5,568.7 717.5,574.7 721.5,580.3 725.5,585.5 729.5,590.8 733.5,596.2 737.5,601.8 741.5,607.5 745.5,612.5 749.5,615.9 753.5,617.9 757.5,618.5 761.5,618.5 765.5,617.9 769.5,617.2 773.5,616.0 777.5,614.2 781.5,611.9 785.5,609.3 789.5,606.7 793.5,603.5 797.5,599.5 801.5,594.8 805.5,589.8 809.5,584.7 813.5,579.9 817.5,575.8 821.5,571.8 825.5,567.6 829.5,564.9 833.5,562.8 837.5,561.0 841.5,559.2 845.5,557.5 849.5,556.1 853.5,554.9 857.5,554.5 861.5,554.6 865.5,554.6 869.5,554.7 873.5,555.6 877.5,556.6 881.5,557.7 885.5,559.1 889.5,560.8 893.5,562.1 897.5,563.5 901.5,565.2 905.5,566.9 909.5,568.7 913.5,571.0 917.5,574.2 921.5,577.0 925.5,579.0 929.5,581.2 933.5,583.1 937.5,584.8 941.5,585.7 945.5,585.3 949.5,584.6 953.5,584.3 957.5,582.5 961.5,580.1 965.5,578.2 969.5,575.6 973.5,570.5 977.5,564.8 981.5,558.9 985.5,553.6 989.5,548.9 993.5,544.5 997.5,540.2 1001.5,535.7 1005.5,531.8 1009.5,528.0 1013.5,525.0 1017.5,522.0 1021.5,519.2 1025.5,517.3 1029.5,515.9 1033.5,514.6 1037.5,513.9 1041.5,513.3 1045.5,512.7 1049.5,511.8 1053.5,510.9 1057.5,510.3 1061.5,510.3 1065.5,510.3 1069.5,510.1 1073.5,510.1 1077.5,510.9 1081.5,512.8 1085.5,515.4 1089.5,518.7 1093.5,523.3 1097.5,528.6 1101.5,534.5 1105.5,540.2 1109.5,545.4 1113.5,550.0 1117.5,555.1 1121.5,561.1 1125.5,566.8 1129.5,571.7 1133.5,576.0 1137.5,579.9 1141.5,583.3 1145.5,586.2 1149.5,588.4 1153.5,589.7 1157.5,590.8 1161.5,591.4 1165.5,593.1 1169.5,595.1 1173.5,596.8 1177.5,597.7 1181.5,598.1 1185.5,597.7 1189.5,596.9 1193.5,596.7 1197.5,596.5 1201.5,596.4 1205.5,595.8 1209.5,596.4 1213.5,597.5 1217.5,600.1 1221.5,602.6 1225.5,604.8 1229.5,607.0 1233.5,608.2 1237.5,608.9" fill="none" stroke="#e8e81c" stroke-width="1" shape-rendering="crispEdges"/><rect x="1324" y="160" width="8" height="9" fill="#000"/><path d="M1328 160.5 L1331.5 164 L1324.5 164 Z M1328 164.5 L1331.8 168.5 L1324.2 168.5 Z" fill="#f0a030"/><line x1="1261" y1="168.5" x2="1333" y2="168.5" stroke="#f0a030"/><path d="M73 657 L77.5 665 L68.5 665 Z" fill="#ff7010"/><g transform="translate(28.9,475.6)"><line x1="5.00" y1="0.00" x2="7.00" y2="0.00" stroke="#ff0000" stroke-width="1.2"/><line x1="3.54" y1="3.54" x2="4.95" y2="4.95" stroke="#ff0000" stroke-width="1.2"/><line x1="0.00" y1="5.00" x2="0.00" y2="7.00" stroke="#ff0000" stroke-width="1.2"/><line x1="-3.54" y1="3.54" x2="-4.95" y2="4.95" stroke="#ff0000" stroke-width="1.2"/><line x1="-5.00" y1="0.00" x2="-7.00" y2="0.00" stroke="#ff0000" stroke-width="1.2"/><line x1="-3.54" y1="-3.54" x2="-4.95" y2="-4.95" stroke="#ff0000" stroke-width="1.2"/><line x1="-0.00" y1="-5.00" x2="-0.00" y2="-7.00" stroke="#ff0000" stroke-width="1.2"/><line x1="3.54" y1="-3.54" x2="4.95" y2="-4.95" stroke="#ff0000" stroke-width="1.2"/><circle r="3.6" fill="#fff" stroke="#000" stroke-width="1"/><circle r="1.9" fill="#f00"/></g><rect x="1201.5" y="1.5" width="13" height="13" fill="#000" stroke="#c4c4c4" stroke-width="1"/><rect x="1217.5" y="1.5" width="13" height="13" fill="#000" stroke="#c4c4c4" stroke-width="1"/><rect x="1233.5" y="1.5" width="13" height="13" fill="#000" stroke="#c4c4c4" stroke-width="1"/><rect x="1249.5" y="1.5" width="13" height="13" fill="#000" stroke="#c4c4c4" stroke-width="1"/><g stroke="#bdbdbd" fill="none" shape-rendering="crispEdges"><path d="M1208.5 3v3M1208.5 10v3M1208.5 7.5v1M1203 8.5h3M1211 8.5h3"/><path d="M1220.5 4v9M1219 12.5h10M1223.5 4v7"/><path d="M1219.5 5h2M1227.5 11.5v2"/><path d="M1236.5 4v9M1235 12.5h10M1235.5 5h2M1243.5 11.5v2"/><rect x="1251.5" y="3.5" width="3" height="9"/><path d="M1255 8.5h4M1258.5 6.5v4M1259.5 7.5v2"/></g><path d="M1227.5 4.5 L1224.5 7.5 L1227.5 10.5 Z" fill="#bdbdbd"/><path d="M1239 4.5 L1244 7.5 L1239 10.5 Z" fill="#bdbdbd"/><path d="M1220.5 2.5 L1219 4.5 L1222 4.5 Z M1236.5 2.5 L1235 4.5 L1238 4.5 Z M1230 12.5 L1228 11 L1228 14 Z M1246 12.5 L1244 11 L1244 14 Z" fill="#bdbdbd"/><circle cx="202.5" cy="11.5" r="4.3" fill="none" stroke="#ff7010" stroke-width="1"/><path d="M198 11.5h9M202.5 7v9" stroke="#ff7010" stroke-width="1" shape-rendering="crispEdges"/><rect x="214.5" y="1.5" width="11" height="12" fill="#f8f8ff" stroke="#2a3a90"/><path d="M215.5 8 L218 5 L220.5 7 L224.5 3.5" stroke="#e02020" fill="none" stroke-width="1.2"/><path d="M215.5 11 L219 7.5 L221 9.5 L224.5 7" stroke="#2040e0" fill="none" stroke-width="1.1"/><path d="M226 3v11.5h-11" stroke="#888" fill="none"/></svg>
<div id="side">
<div class="tab" style="top:0;height:51px;padding-top:4.5px">分<br>时<br>图</div>
<div class="tab on" style="top:51px;height:46px;padding-top:1.3px"><span style="font-family:'Liberation Serif',serif">K</span><br>线<br>图</div>
<div class="tab" style="top:97px;height:52px;padding-top:6.4px">闪<br>电<br>图</div>
<div class="tab" style="top:149px;height:65px;padding-top:5.8px">合<br>约<br>资<br>料</div>
</div>
<div class="ax l" style="top:14px">100.8578</div>
<div class="ax r" style="top:14px">100.8578</div>
<div class="ax l" style="top:69px">100.2363</div>
<div class="ax r" style="top:69px">100.2363</div>
<div class="ax l" style="top:125px">99.6147</div>
<div class="ax l" style="top:181px">98.9932</div>
<div class="ax l" style="top:237px">98.3717</div>
<div class="ax r" style="top:237px">98.3717</div>
<div class="ax l" style="top:293px">97.7502</div>
<div class="ax r" style="top:293px">97.7502</div>
<div class="ax l" style="top:349px">97.1287</div>
<div class="ax r" style="top:349px">97.1287</div>
<div class="ax l" style="top:405px">96.5071</div>
<div class="ax r" style="top:405px">96.5071</div>
<div class="ax l" style="top:483px">0.3152</div>
<div class="ax r" style="top:483px">0.3152</div>
<div class="ax l" style="top:509px">0.2196</div>
<div class="ax r" style="top:509px">0.2196</div>
<div class="ax l" style="top:536px">0.1239</div>
<div class="ax r" style="top:536px">0.1239</div>
<div class="ax l" style="top:563px">0.0283</div>
<div class="ax r" style="top:563px">0.0283</div>
<div class="ax l" style="top:589px">-0.0674</div>
<div class="ax r" style="top:589px">-0.0674</div>
<div class="ax l" style="top:616px">-0.1630</div>
<div class="ax r" style="top:616px">-0.1630</div>
<div class="ax r" style="top:125px">99.6147</div>
<div class="ax r" style="top:181px">98.9932</div>
<div class="t" style="left:92.0px;top:1.9px;color:#e6e6e6;font-size:12.0px;line-height:14px;font-weight:normal;font-family:'Liberation Sans',sans-serif;">美元指数</div>
<div class="t" style="left:140.0px;top:1.7px;color:#ff7a10;font-size:12.7px;line-height:15px;font-weight:normal;font-family:'Liberation Sans',sans-serif;">【240分】</div>
<div class="t" style="left:229.3px;top:2.1px;color:#e6e6e6;font-size:12.4px;line-height:15px;font-weight:normal;font-family:'Liberation Sans',sans-serif;">BOLL(20,2) MID:99.3864</div>
<div class="t" style="left:376.6px;top:2.3px;color:#dcdc20;font-size:11.6px;line-height:14px;font-weight:normal;font-family:'Liberation Sans',sans-serif;">UPPER:99.7532</div>
<div class="t" style="left:470.9px;top:2.4px;color:#e040f0;font-size:11.8px;line-height:14px;font-weight:normal;font-family:'Liberation Sans',sans-serif;">LOWER:99.0197</div>
<div class="t" style="left:92.3px;top:471.0px;color:#e6e6e6;font-size:12.2px;line-height:15px;font-weight:normal;font-family:'Liberation Sans',sans-serif;">MACD(26,12,9) DIFF:-0.1205</div>
<div class="t" style="left:261.4px;top:471.4px;color:#dcdc20;font-size:12.0px;line-height:14px;font-weight:normal;font-family:'Liberation Sans',sans-serif;">DEA:-0.1093</div>
<div class="t" style="left:339.6px;top:471.1px;color:#e040f0;font-size:12.4px;line-height:15px;font-weight:normal;font-family:'Liberation Sans',sans-serif;">MACD:-0.0224</div>
<div class="t" style="left:614.2px;top:125.0px;color:#ec4c5c;font-size:12.3px;line-height:15px;font-weight:bold;font-family:'Liberation Sans',sans-serif;">99.5549</div>
<div class="t" style="left:1078.5px;top:51.5px;color:#ec4c5c;font-size:12.3px;line-height:15px;font-weight:bold;font-family:'Liberation Sans',sans-serif;">100.3599</div>
<div class="t" style="left:218.0px;top:440.0px;color:#50c8a0;font-size:12.3px;line-height:15px;font-weight:bold;font-family:'Liberation Sans',sans-serif;">96.2109</div>
<div class="t" style="left:111.1px;top:652.1px;color:#f2f2f2;font-size:12.4px;line-height:15px;font-weight:bold;font-family:'Liberation Sans',sans-serif;">09/12</div>
<div class="t" style="left:267.4px;top:652.1px;color:#f2f2f2;font-size:12.4px;line-height:15px;font-weight:bold;font-family:'Liberation Sans',sans-serif;">09/22</div>
<div class="t" style="left:435.0px;top:652.1px;color:#f2f2f2;font-size:12.4px;line-height:15px;font-weight:bold;font-family:'Liberation Sans',sans-serif;">10/01</div>
<div class="t" style="left:607.4px;top:652.1px;color:#f2f2f2;font-size:12.4px;line-height:15px;font-weight:bold;font-family:'Liberation Sans',sans-serif;">10/10</div>
<div class="t" style="left:763.3px;top:652.1px;color:#f2f2f2;font-size:12.4px;line-height:15px;font-weight:bold;font-family:'Liberation Sans',sans-serif;">10/20</div>
<div class="t" style="left:1099.6px;top:652.1px;color:#f2f2f2;font-size:12.4px;line-height:15px;font-weight:bold;font-family:'Liberation Sans',sans-serif;">11/07</div>
<div class="t" style="left:30.5px;top:652.9px;color:#ff7010;font-size:12.4px;line-height:15px;font-weight:bold;font-family:'Liberation Sans',sans-serif;">240分</div>
<div style="position:absolute;left:890px;top:651px;width:163px;height:16px;background:#000"></div>
<div class="t" style="left:891.0px;top:652.2px;color:#f0a030;font-size:12.6px;line-height:15px;font-weight:normal;font-family:'Liberation Sans',sans-serif;">2025/10/27 05:00～09:00 —</div>
<div style="position:absolute;left:1265px;top:123px;width:67px;height:16px;background:#000"></div>
<div class="t" style="left:1266.0px;top:124.0px;color:#f0a030;font-size:12.2px;line-height:15px;font-weight:normal;font-family:'Liberation Sans',sans-serif;">99.7343</div>
<div style="position:absolute;left:1264px;top:168px;width:70px;height:18px;background:#000;border:1px solid #f0a030"></div>
<div class="t" style="left:1266.5px;top:169.6px;color:#f0a030;font-size:12.2px;line-height:15px;font-weight:normal;font-family:'Liberation Sans',sans-serif;">99.2309</div>
<div class="t" style="left:1205.0px;top:631.8px;color:#e8ecf4;font-size:30.5px;line-height:37px;font-weight:normal;font-family:'Liberation Sans',sans-serif;letter-spacing:2.5px">FX678</div>
<div style="position:absolute;left:20px;top:670px;width:597px;height:16px;background:#0a0a0a"></div>
<div style="position:absolute;left:20px;top:670px;width:39px;height:16px;background:#ff6a00"></div>
<div style="position:absolute;left:99px;top:670px;width:1px;height:16px;background:#222"></div>
<div style="position:absolute;left:157px;top:670px;width:1px;height:16px;background:#222"></div>
<div style="position:absolute;left:185px;top:670px;width:1px;height:16px;background:#222"></div>
<div style="position:absolute;left:225px;top:670px;width:1px;height:16px;background:#222"></div>
<div style="position:absolute;left:265px;top:670px;width:1px;height:16px;background:#222"></div>
<div style="position:absolute;left:299px;top:670px;width:1px;height:16px;background:#222"></div>
<div style="position:absolute;left:332px;top:670px;width:1px;height:16px;background:#222"></div>
<div style="position:absolute;left:373px;top:670px;width:1px;height:16px;background:#222"></div>
<div style="position:absolute;left:407px;top:670px;width:1px;height:16px;background:#222"></div>
<div style="position:absolute;left:435px;top:670px;width:1px;height:16px;background:#222"></div>
<div style="position:absolute;left:469px;top:670px;width:1px;height:16px;background:#222"></div>
<div style="position:absolute;left:509px;top:670px;width:1px;height:16px;background:#222"></div>
<div style="position:absolute;left:543px;top:670px;width:1px;height:16px;background:#222"></div>
<div style="position:absolute;left:577px;top:670px;width:1px;height:16px;background:#222"></div>
<div style="position:absolute;left:616px;top:670px;width:1px;height:16px;background:#222"></div>
<div class="t" style="left:27.5px;top:670.4px;color:#ffffff;font-size:12.0px;line-height:14px;font-weight:normal;font-family:'Liberation Sans',sans-serif;">指标</div>
<div class="t" style="left:66.0px;top:670.4px;color:#ffffff;font-size:12.0px;line-height:14px;font-weight:normal;font-family:'Liberation Sans',sans-serif;">模板</div>
<div class="t" style="left:107.0px;top:673.2px;color:#ff7010;font-size:12.0px;line-height:14px;font-weight:normal;font-family:'Liberation Mono',monospace;letter-spacing:-1.2px">VIP</div>
<div class="t" style="left:127.0px;top:670.4px;color:#ff7010;font-size:12.0px;line-height:14px;font-weight:normal;font-family:'Liberation Sans',sans-serif;">指标</div>
<div class="t" style="left:165.4px;top:673.2px;color:#c4c4c4;font-size:12.0px;line-height:14px;font-weight:normal;font-family:'Liberation Mono',monospace;letter-spacing:-1.2px">MA</div>
<div class="t" style="left:193.4px;top:673.2px;color:#c4c4c4;font-size:12.0px;line-height:14px;font-weight:normal;font-family:'Liberation Mono',monospace;letter-spacing:-1.2px">MACD</div>
<div class="t" style="left:232.5px;top:673.2px;color:#c4c4c4;font-size:12.0px;line-height:14px;font-weight:normal;font-family:'Liberation Mono',monospace;letter-spacing:-1.2px">BIAS</div>
<div class="t" style="left:272.5px;top:673.2px;color:#c4c4c4;font-size:12.0px;line-height:14px;font-weight:normal;font-family:'Liberation Mono',monospace;letter-spacing:-1.2px">CCI</div>
<div class="t" style="left:307.0px;top:673.2px;color:#c4c4c4;font-size:12.0px;line-height:14px;font-weight:normal;font-family:'Liberation Mono',monospace;letter-spacing:-1.2px">KDJ</div>
<div class="t" style="left:340.5px;top:673.2px;color:#c4c4c4;font-size:12.0px;line-height:14px;font-weight:normal;font-family:'Liberation Mono',monospace;letter-spacing:-1.2px">LW&amp;</div>
<div class="t" style="left:380.5px;top:673.2px;color:#c4c4c4;font-size:12.0px;line-height:14px;font-weight:normal;font-family:'Liberation Mono',monospace;letter-spacing:-1.2px">RSI</div>
<div class="t" style="left:415.2px;top:673.2px;color:#c4c4c4;font-size:12.0px;line-height:14px;font-weight:normal;font-family:'Liberation Mono',monospace;letter-spacing:-1.2px">CR</div>
<div class="t" style="left:443.5px;top:673.2px;color:#c4c4c4;font-size:12.0px;line-height:14px;font-weight:normal;font-family:'Liberation Mono',monospace;letter-spacing:-1.2px">PSY</div>
<div class="t" style="left:477.3px;top:673.2px;color:#c4c4c4;font-size:12.0px;line-height:14px;font-weight:normal;font-family:'Liberation Mono',monospace;letter-spacing:-1.2px">BOLL</div>
<div class="t" style="left:517.3px;top:673.2px;color:#c4c4c4;font-size:12.0px;line-height:14px;font-weight:normal;font-family:'Liberation Mono',monospace;letter-spacing:-1.2px">VOL</div>
<div class="t" style="left:551.1px;top:673.2px;color:#c4c4c4;font-size:12.0px;line-height:14px;font-weight:normal;font-family:'Liberation Mono',monospace;letter-spacing:-1.2px">OBV</div>
<div class="t" style="left:585.4px;top:670.4px;color:#c8c8c8;font-size:12.0px;line-height:14px;font-weight:normal;font-family:'Liberation Sans',sans-serif;">设置</div>
</body></html>
